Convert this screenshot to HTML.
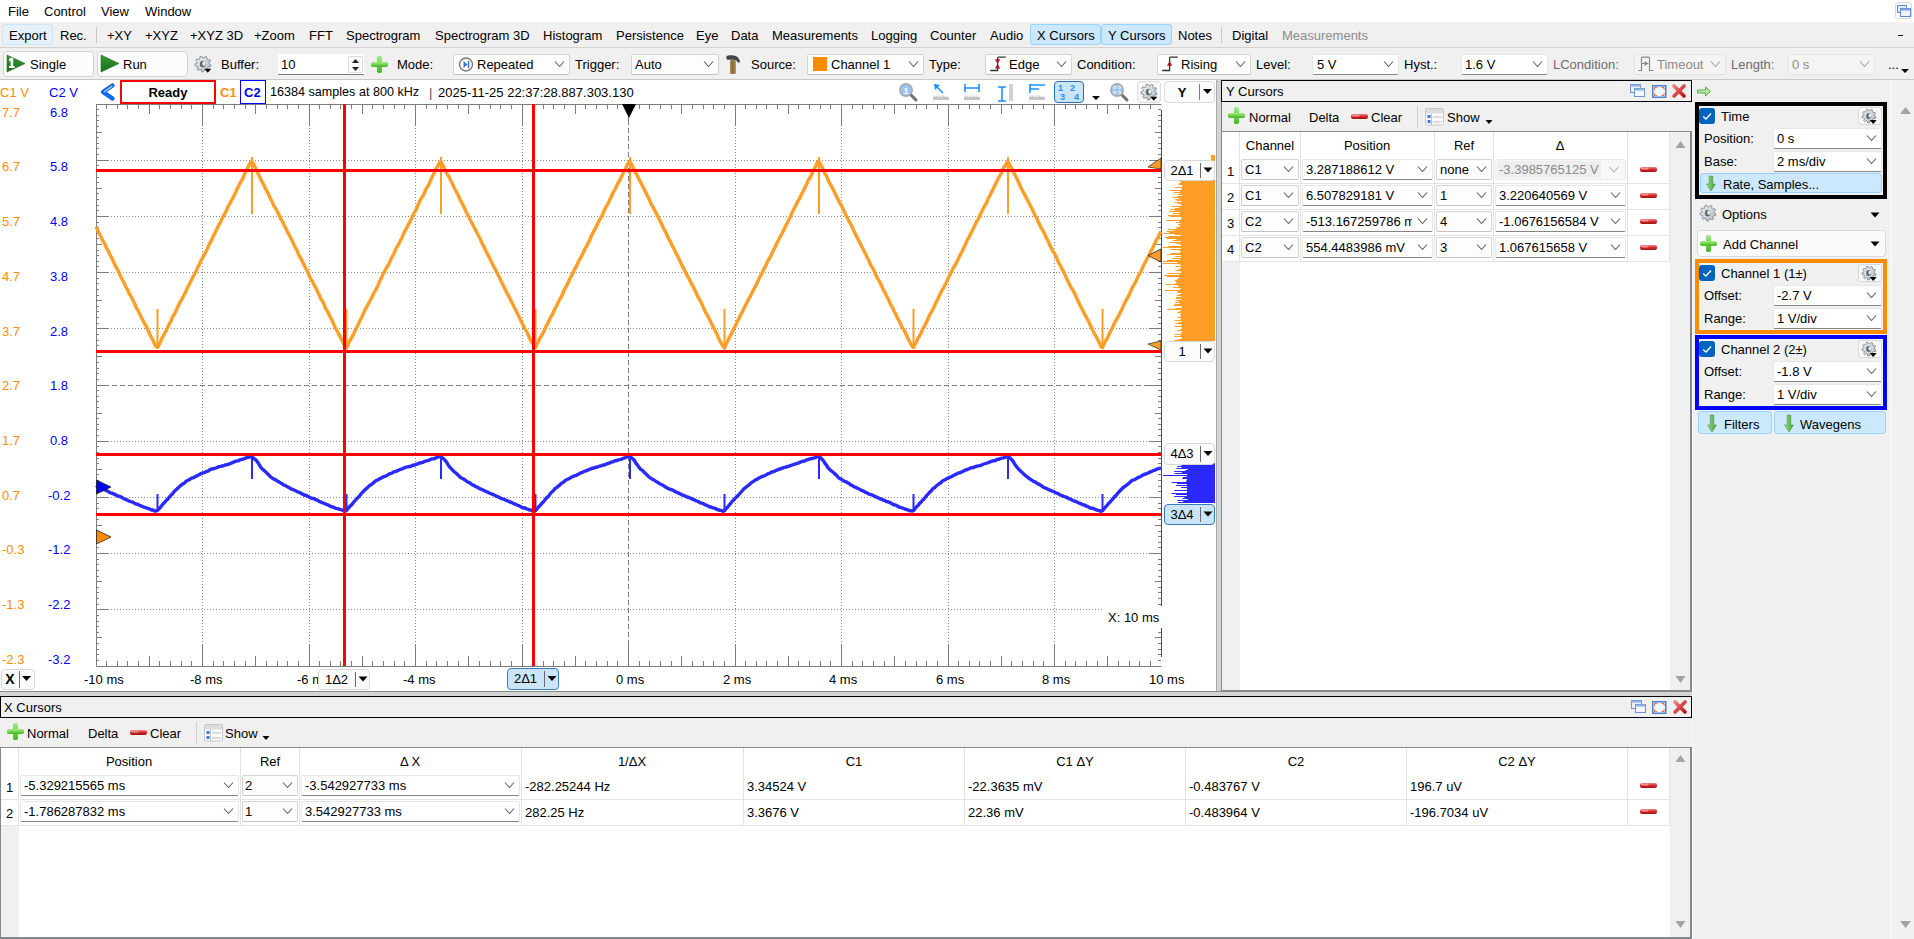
<!DOCTYPE html>
<html><head><meta charset="utf-8"><title>WaveForms Scope</title>
<style>
html,body{margin:0;padding:0;}
body{width:1914px;height:939px;overflow:hidden;position:relative;background:#f0f0f0;font-family:"Liberation Sans", sans-serif;font-size:13px;color:#000;}
.t{position:absolute;white-space:nowrap;line-height:13px;}
svg{position:absolute;left:0;top:0;}
</style></head><body>
<div style="position:absolute;left:0px;top:0px;width:1914px;height:22px;box-sizing:border-box;background:#fff;"></div><div style="position:absolute;left:0px;top:22px;width:1914px;height:1px;box-sizing:border-box;background:#f5f5f5;"></div><div style="position:absolute;left:96px;top:27px;width:1px;height:16px;box-sizing:border-box;background:#c8c8c8;"></div><div style="position:absolute;left:1221px;top:27px;width:1px;height:16px;box-sizing:border-box;background:#c8c8c8;"></div><div style="position:absolute;left:1898px;top:35px;width:5px;height:1px;box-sizing:border-box;background:#000;"></div><div style="position:absolute;left:0px;top:47px;width:1914px;height:1px;box-sizing:border-box;background:#d2d2d2;"></div><div style="position:absolute;left:0px;top:79px;width:1914px;height:1px;box-sizing:border-box;background:#c8c8c8;"></div><div style="position:absolute;left:0px;top:80px;width:1216px;height:611px;box-sizing:border-box;background:#fff;"></div><div style="position:absolute;left:1216px;top:80px;width:6px;height:611px;box-sizing:border-box;background:#d4d4d4;border-left:1px solid #a8a8a8;border-right:1px solid #7c7c7c;"></div><div style="position:absolute;left:0px;top:691px;width:1692px;height:5px;box-sizing:border-box;background:#d4d4d4;border-top:1px solid #8a8a8a;"></div><div style="position:absolute;left:1221px;top:80px;width:471px;height:22px;box-sizing:border-box;background:#f0f0f0;border:1px solid #000;"></div><div style="position:absolute;left:1417px;top:106px;width:1px;height:22px;box-sizing:border-box;background:#d0d0d0;"></div><div style="position:absolute;left:1221px;top:131px;width:471px;height:560px;box-sizing:border-box;background:#fff;border:1px solid #828790;border-right:2px solid #828790;"></div><div style="position:absolute;left:1222px;top:262px;width:18px;height:428px;background:#f0f0f0;"></div><div style="position:absolute;left:1670px;top:132px;width:20px;height:558px;background:#f0f0f0;"></div><div style="position:absolute;left:1239px;top:132px;width:1px;height:130px;background:#e3e3e3;"></div><div style="position:absolute;left:1300px;top:132px;width:1px;height:130px;background:#e3e3e3;"></div><div style="position:absolute;left:1434px;top:132px;width:1px;height:130px;background:#e3e3e3;"></div><div style="position:absolute;left:1493px;top:132px;width:1px;height:130px;background:#e3e3e3;"></div><div style="position:absolute;left:1627px;top:132px;width:1px;height:130px;background:#e3e3e3;"></div><div style="position:absolute;left:1669px;top:132px;width:1px;height:130px;background:#e3e3e3;"></div><div style="position:absolute;left:1222px;top:183px;width:447px;height:1px;background:#e3e3e3;"></div><div style="position:absolute;left:1222px;top:209px;width:447px;height:1px;background:#e3e3e3;"></div><div style="position:absolute;left:1222px;top:235px;width:447px;height:1px;background:#e3e3e3;"></div><div style="position:absolute;left:1222px;top:261px;width:447px;height:1px;background:#e3e3e3;"></div><div style="position:absolute;left:1692px;top:80px;width:1px;height:859px;background:#fafafa;"></div><div style="position:absolute;left:1891px;top:80px;width:1px;height:859px;background:#fdfdfd;"></div><div style="position:absolute;left:0px;top:696px;width:1692px;height:22px;box-sizing:border-box;background:#f0f0f0;border:1px solid #000;"></div><div style="position:absolute;left:196px;top:722px;width:1px;height:22px;box-sizing:border-box;background:#d0d0d0;"></div><div style="position:absolute;left:0px;top:747px;width:1692px;height:192px;box-sizing:border-box;background:#fff;border:1px solid #828790;border-right:2px solid #828790;border-bottom:2px solid #828790;"></div><div style="position:absolute;left:1px;top:826px;width:18px;height:111px;background:#f0f0f0;"></div><div style="position:absolute;left:1670px;top:748px;width:20px;height:189px;background:#f0f0f0;"></div><div style="position:absolute;left:18px;top:748px;width:1px;height:78px;background:#e3e3e3;"></div><div style="position:absolute;left:240px;top:748px;width:1px;height:78px;background:#e3e3e3;"></div><div style="position:absolute;left:299px;top:748px;width:1px;height:78px;background:#e3e3e3;"></div><div style="position:absolute;left:521px;top:748px;width:1px;height:78px;background:#e3e3e3;"></div><div style="position:absolute;left:743px;top:748px;width:1px;height:78px;background:#e3e3e3;"></div><div style="position:absolute;left:964px;top:748px;width:1px;height:78px;background:#e3e3e3;"></div><div style="position:absolute;left:1185px;top:748px;width:1px;height:78px;background:#e3e3e3;"></div><div style="position:absolute;left:1406px;top:748px;width:1px;height:78px;background:#e3e3e3;"></div><div style="position:absolute;left:1627px;top:748px;width:1px;height:78px;background:#e3e3e3;"></div><div style="position:absolute;left:1669px;top:748px;width:1px;height:78px;background:#e3e3e3;"></div><div style="position:absolute;left:1px;top:799px;width:1668px;height:1px;background:#e3e3e3;"></div><div style="position:absolute;left:1px;top:825px;width:1668px;height:1px;background:#e3e3e3;"></div>
<svg width="1914" height="939" viewBox="0 0 1914 939"><defs>
<linearGradient id="gtri" x1="0" y1="0" x2="0" y2="1"><stop offset="0" stop-color="#3a9a3a"/><stop offset="1" stop-color="#1a6e1a"/></linearGradient>
<linearGradient id="gplus" x1="0" y1="0" x2="0" y2="1"><stop offset="0" stop-color="#a6ec8c"/><stop offset="0.5" stop-color="#72d24e"/><stop offset="1" stop-color="#3cb81e"/></linearGradient>
<linearGradient id="rpill" x1="0" y1="0" x2="0" y2="1"><stop offset="0" stop-color="#f08a8a"/><stop offset="0.5" stop-color="#d62a2a"/><stop offset="1" stop-color="#9a1010"/></linearGradient>
<linearGradient id="gear" x1="0" y1="0" x2="1" y2="1"><stop offset="0" stop-color="#f2f4f5"/><stop offset="1" stop-color="#b4bbc1"/></linearGradient>
<linearGradient id="garr" x1="0" y1="0" x2="1" y2="0"><stop offset="0" stop-color="#9fdc8a"/><stop offset="1" stop-color="#3f9f35"/></linearGradient>
<linearGradient id="xred" x1="0" y1="0" x2="1" y2="1"><stop offset="0" stop-color="#f08080"/><stop offset="1" stop-color="#c01010"/></linearGradient>
<linearGradient id="hmr" x1="0" y1="0" x2="1" y2="0"><stop offset="0" stop-color="#a88a52"/><stop offset="0.5" stop-color="#8a6a30"/><stop offset="1" stop-color="#b09a6a"/></linearGradient>
</defs><g shape-rendering="auto"><line x1="202.5" y1="104" x2="202.5" y2="666" stroke="#8a8a8a" stroke-width="1" stroke-dasharray="1 2"/><line x1="309.5" y1="104" x2="309.5" y2="666" stroke="#8a8a8a" stroke-width="1" stroke-dasharray="1 2"/><line x1="415.5" y1="104" x2="415.5" y2="666" stroke="#8a8a8a" stroke-width="1" stroke-dasharray="1 2"/><line x1="522.5" y1="104" x2="522.5" y2="666" stroke="#8a8a8a" stroke-width="1" stroke-dasharray="1 2"/><line x1="628.5" y1="104" x2="628.5" y2="666" stroke="#7a7a7a" stroke-width="1" stroke-dasharray="5 3"/><line x1="735.5" y1="104" x2="735.5" y2="666" stroke="#8a8a8a" stroke-width="1" stroke-dasharray="1 2"/><line x1="841.5" y1="104" x2="841.5" y2="666" stroke="#8a8a8a" stroke-width="1" stroke-dasharray="1 2"/><line x1="948.5" y1="104" x2="948.5" y2="666" stroke="#8a8a8a" stroke-width="1" stroke-dasharray="1 2"/><line x1="1054.5" y1="104" x2="1054.5" y2="666" stroke="#8a8a8a" stroke-width="1" stroke-dasharray="1 2"/><line x1="96" y1="160.5" x2="1161" y2="160.5" stroke="#8a8a8a" stroke-width="1" stroke-dasharray="1 2"/><line x1="96" y1="216.5" x2="1161" y2="216.5" stroke="#8a8a8a" stroke-width="1" stroke-dasharray="1 2"/><line x1="96" y1="272.5" x2="1161" y2="272.5" stroke="#8a8a8a" stroke-width="1" stroke-dasharray="1 2"/><line x1="96" y1="328.5" x2="1161" y2="328.5" stroke="#8a8a8a" stroke-width="1" stroke-dasharray="1 2"/><line x1="96" y1="385.5" x2="1161" y2="385.5" stroke="#7a7a7a" stroke-width="1" stroke-dasharray="5 3"/><line x1="96" y1="441.5" x2="1161" y2="441.5" stroke="#8a8a8a" stroke-width="1" stroke-dasharray="1 2"/><line x1="96" y1="497.5" x2="1161" y2="497.5" stroke="#8a8a8a" stroke-width="1" stroke-dasharray="1 2"/><line x1="96" y1="553.5" x2="1161" y2="553.5" stroke="#8a8a8a" stroke-width="1" stroke-dasharray="1 2"/><line x1="96" y1="609.5" x2="1161" y2="609.5" stroke="#8a8a8a" stroke-width="1" stroke-dasharray="1 2"/><path d="M96.5,104 V666.5 H1161.5 M96,104.5 H1161.5" stroke="#7c7c7c" stroke-width="1" fill="none"/><path d="M106.5,104 v5 M106.5,666 v-5 M117.5,104 v5 M117.5,666 v-5 M127.5,104 v5 M127.5,666 v-5 M138.5,104 v5 M138.5,666 v-5 M149.5,104 v10 M149.5,666 v-10 M159.5,104 v5 M159.5,666 v-5 M170.5,104 v5 M170.5,666 v-5 M181.5,104 v5 M181.5,666 v-5 M191.5,104 v5 M191.5,666 v-5 M202.5,104 v21 M202.5,666 v-21 M213.5,104 v5 M213.5,666 v-5 M223.5,104 v5 M223.5,666 v-5 M234.5,104 v5 M234.5,666 v-5 M245.5,104 v5 M245.5,666 v-5 M255.5,104 v10 M255.5,666 v-10 M266.5,104 v5 M266.5,666 v-5 M277.5,104 v5 M277.5,666 v-5 M287.5,104 v5 M287.5,666 v-5 M298.5,104 v5 M298.5,666 v-5 M309.5,104 v21 M309.5,666 v-21 M319.5,104 v5 M319.5,666 v-5 M330.5,104 v5 M330.5,666 v-5 M340.5,104 v5 M340.5,666 v-5 M351.5,104 v5 M351.5,666 v-5 M362.5,104 v10 M362.5,666 v-10 M372.5,104 v5 M372.5,666 v-5 M383.5,104 v5 M383.5,666 v-5 M394.5,104 v5 M394.5,666 v-5 M404.5,104 v5 M404.5,666 v-5 M415.5,104 v21 M415.5,666 v-21 M426.5,104 v5 M426.5,666 v-5 M436.5,104 v5 M436.5,666 v-5 M447.5,104 v5 M447.5,666 v-5 M458.5,104 v5 M458.5,666 v-5 M468.5,104 v10 M468.5,666 v-10 M479.5,104 v5 M479.5,666 v-5 M490.5,104 v5 M490.5,666 v-5 M500.5,104 v5 M500.5,666 v-5 M511.5,104 v5 M511.5,666 v-5 M522.5,104 v21 M522.5,666 v-21 M532.5,104 v5 M532.5,666 v-5 M543.5,104 v5 M543.5,666 v-5 M553.5,104 v5 M553.5,666 v-5 M564.5,104 v5 M564.5,666 v-5 M575.5,104 v10 M575.5,666 v-10 M585.5,104 v5 M585.5,666 v-5 M596.5,104 v5 M596.5,666 v-5 M607.5,104 v5 M607.5,666 v-5 M617.5,104 v5 M617.5,666 v-5 M628.5,104 v21 M628.5,666 v-21 M639.5,104 v5 M639.5,666 v-5 M649.5,104 v5 M649.5,666 v-5 M660.5,104 v5 M660.5,666 v-5 M671.5,104 v5 M671.5,666 v-5 M681.5,104 v10 M681.5,666 v-10 M692.5,104 v5 M692.5,666 v-5 M703.5,104 v5 M703.5,666 v-5 M713.5,104 v5 M713.5,666 v-5 M724.5,104 v5 M724.5,666 v-5 M735.5,104 v21 M735.5,666 v-21 M745.5,104 v5 M745.5,666 v-5 M756.5,104 v5 M756.5,666 v-5 M766.5,104 v5 M766.5,666 v-5 M777.5,104 v5 M777.5,666 v-5 M788.5,104 v10 M788.5,666 v-10 M798.5,104 v5 M798.5,666 v-5 M809.5,104 v5 M809.5,666 v-5 M820.5,104 v5 M820.5,666 v-5 M830.5,104 v5 M830.5,666 v-5 M841.5,104 v21 M841.5,666 v-21 M852.5,104 v5 M852.5,666 v-5 M862.5,104 v5 M862.5,666 v-5 M873.5,104 v5 M873.5,666 v-5 M884.5,104 v5 M884.5,666 v-5 M894.5,104 v10 M894.5,666 v-10 M905.5,104 v5 M905.5,666 v-5 M916.5,104 v5 M916.5,666 v-5 M926.5,104 v5 M926.5,666 v-5 M937.5,104 v5 M937.5,666 v-5 M948.5,104 v21 M948.5,666 v-21 M958.5,104 v5 M958.5,666 v-5 M969.5,104 v5 M969.5,666 v-5 M979.5,104 v5 M979.5,666 v-5 M990.5,104 v5 M990.5,666 v-5 M1001.5,104 v10 M1001.5,666 v-10 M1011.5,104 v5 M1011.5,666 v-5 M1022.5,104 v5 M1022.5,666 v-5 M1033.5,104 v5 M1033.5,666 v-5 M1043.5,104 v5 M1043.5,666 v-5 M1054.5,104 v21 M1054.5,666 v-21 M1065.5,104 v5 M1065.5,666 v-5 M1075.5,104 v5 M1075.5,666 v-5 M1086.5,104 v5 M1086.5,666 v-5 M1097.5,104 v5 M1097.5,666 v-5 M1107.5,104 v10 M1107.5,666 v-10 M1118.5,104 v5 M1118.5,666 v-5 M1129.5,104 v5 M1129.5,666 v-5 M1139.5,104 v5 M1139.5,666 v-5 M1150.5,104 v5 M1150.5,666 v-5 M96,109.5 h3 M1161,109.5 h-3 M96,115.5 h3 M1161,115.5 h-3 M96,120.5 h3 M1161,120.5 h-3 M96,126.5 h3 M1161,126.5 h-3 M96,132.5 h6 M1161,132.5 h-6 M96,137.5 h3 M1161,137.5 h-3 M96,143.5 h3 M1161,143.5 h-3 M96,148.5 h3 M1161,148.5 h-3 M96,154.5 h3 M1161,154.5 h-3 M96,160.5 h12 M1161,160.5 h-12 M96,165.5 h3 M1161,165.5 h-3 M96,171.5 h3 M1161,171.5 h-3 M96,177.5 h3 M1161,177.5 h-3 M96,182.5 h3 M1161,182.5 h-3 M96,188.5 h6 M1161,188.5 h-6 M96,193.5 h3 M1161,193.5 h-3 M96,199.5 h3 M1161,199.5 h-3 M96,205.5 h3 M1161,205.5 h-3 M96,210.5 h3 M1161,210.5 h-3 M96,216.5 h12 M1161,216.5 h-12 M96,222.5 h3 M1161,222.5 h-3 M96,227.5 h3 M1161,227.5 h-3 M96,233.5 h3 M1161,233.5 h-3 M96,238.5 h3 M1161,238.5 h-3 M96,244.5 h6 M1161,244.5 h-6 M96,250.5 h3 M1161,250.5 h-3 M96,255.5 h3 M1161,255.5 h-3 M96,261.5 h3 M1161,261.5 h-3 M96,266.5 h3 M1161,266.5 h-3 M96,272.5 h12 M1161,272.5 h-12 M96,278.5 h3 M1161,278.5 h-3 M96,283.5 h3 M1161,283.5 h-3 M96,289.5 h3 M1161,289.5 h-3 M96,295.5 h3 M1161,295.5 h-3 M96,300.5 h6 M1161,300.5 h-6 M96,306.5 h3 M1161,306.5 h-3 M96,311.5 h3 M1161,311.5 h-3 M96,317.5 h3 M1161,317.5 h-3 M96,323.5 h3 M1161,323.5 h-3 M96,328.5 h12 M1161,328.5 h-12 M96,334.5 h3 M1161,334.5 h-3 M96,340.5 h3 M1161,340.5 h-3 M96,345.5 h3 M1161,345.5 h-3 M96,351.5 h3 M1161,351.5 h-3 M96,356.5 h6 M1161,356.5 h-6 M96,362.5 h3 M1161,362.5 h-3 M96,368.5 h3 M1161,368.5 h-3 M96,373.5 h3 M1161,373.5 h-3 M96,379.5 h3 M1161,379.5 h-3 M96,385.5 h12 M1161,385.5 h-12 M96,390.5 h3 M1161,390.5 h-3 M96,396.5 h3 M1161,396.5 h-3 M96,401.5 h3 M1161,401.5 h-3 M96,407.5 h3 M1161,407.5 h-3 M96,413.5 h6 M1161,413.5 h-6 M96,418.5 h3 M1161,418.5 h-3 M96,424.5 h3 M1161,424.5 h-3 M96,429.5 h3 M1161,429.5 h-3 M96,435.5 h3 M1161,435.5 h-3 M96,441.5 h12 M1161,441.5 h-12 M96,446.5 h3 M1161,446.5 h-3 M96,452.5 h3 M1161,452.5 h-3 M96,458.5 h3 M1161,458.5 h-3 M96,463.5 h3 M1161,463.5 h-3 M96,469.5 h6 M1161,469.5 h-6 M96,474.5 h3 M1161,474.5 h-3 M96,480.5 h3 M1161,480.5 h-3 M96,486.5 h3 M1161,486.5 h-3 M96,491.5 h3 M1161,491.5 h-3 M96,497.5 h12 M1161,497.5 h-12 M96,503.5 h3 M1161,503.5 h-3 M96,508.5 h3 M1161,508.5 h-3 M96,514.5 h3 M1161,514.5 h-3 M96,519.5 h3 M1161,519.5 h-3 M96,525.5 h6 M1161,525.5 h-6 M96,531.5 h3 M1161,531.5 h-3 M96,536.5 h3 M1161,536.5 h-3 M96,542.5 h3 M1161,542.5 h-3 M96,547.5 h3 M1161,547.5 h-3 M96,553.5 h12 M1161,553.5 h-12 M96,559.5 h3 M1161,559.5 h-3 M96,564.5 h3 M1161,564.5 h-3 M96,570.5 h3 M1161,570.5 h-3 M96,576.5 h3 M1161,576.5 h-3 M96,581.5 h6 M1161,581.5 h-6 M96,587.5 h3 M1161,587.5 h-3 M96,592.5 h3 M1161,592.5 h-3 M96,598.5 h3 M1161,598.5 h-3 M96,604.5 h3 M1161,604.5 h-3 M96,609.5 h12 M1161,609.5 h-12 M96,615.5 h3 M1161,615.5 h-3 M96,621.5 h3 M1161,621.5 h-3 M96,626.5 h3 M1161,626.5 h-3 M96,632.5 h3 M1161,632.5 h-3 M96,637.5 h6 M1161,637.5 h-6 M96,643.5 h3 M1161,643.5 h-3 M96,649.5 h3 M1161,649.5 h-3 M96,654.5 h3 M1161,654.5 h-3 M96,660.5 h3 M1161,660.5 h-3" stroke="#7c7c7c" stroke-width="1" fill="none"/><path d="M1161.5,110 V606 M1161.5,628 V657" stroke="#ff0000" stroke-width="1"/><rect x="1104" y="606" width="57" height="21" fill="#fff"/><polyline points="96.0,226.9 97.5,229.7 99.0,233.3 100.5,235.6 102.0,239.1 103.5,241.9 105.0,244.5 106.5,248.0 108.0,250.5 109.5,253.9 111.0,256.5 112.5,259.5 114.0,262.9 115.5,266.3 117.0,268.5 118.5,271.6 120.0,275.0 121.5,278.4 123.0,281.0 124.5,283.7 126.0,287.4 127.5,289.3 129.0,293.2 130.5,295.5 132.0,298.3 133.5,301.3 135.0,304.5 136.5,308.1 138.0,310.3 139.5,313.8 141.0,316.8 142.5,319.5 144.0,322.7 145.5,325.1 147.0,328.1 148.5,331.2 150.0,334.8 151.5,337.5 153.0,340.3 154.5,343.6 156.0,346.5 157.5,347.3 159.0,344.9 160.5,341.8 162.0,338.2 163.5,335.7 165.0,332.6 166.5,330.1 168.0,326.9 169.5,323.4 171.0,321.2 172.5,317.2 174.0,314.6 175.5,312.0 177.0,308.3 178.5,305.7 180.0,302.2 181.5,300.0 183.0,297.1 184.5,293.9 186.0,291.3 187.5,287.6 189.0,285.1 190.5,282.0 192.0,279.0 193.5,275.8 195.0,273.3 196.5,270.5 198.0,266.9 199.5,264.1 201.0,260.4 202.5,258.2 204.0,255.2 205.5,252.6 207.0,249.4 208.5,245.8 210.0,242.9 211.5,240.3 213.0,236.5 214.5,234.1 216.0,230.7 217.5,227.7 219.0,224.6 220.5,222.5 222.0,218.7 223.5,215.9 225.0,213.1 226.5,210.7 228.0,206.7 229.5,204.2 231.0,201.3 232.5,198.8 234.0,195.7 235.5,192.8 237.0,189.1 238.5,186.3 240.0,183.2 241.5,180.9 243.0,178.0 244.5,174.0 246.0,171.1 247.5,168.1 249.0,165.2 250.5,162.5 252.0,161.6 253.5,164.2 255.0,166.9 256.5,170.3 258.0,173.3 259.5,176.5 261.0,179.9 262.5,182.6 264.0,185.4 265.5,188.5 267.0,191.5 268.5,193.8 270.0,197.8 271.5,200.6 273.0,203.7 274.5,206.6 276.0,209.1 277.5,212.1 279.0,214.7 280.5,218.4 282.0,220.7 283.5,223.6 285.0,226.8 286.5,229.7 288.0,232.9 289.5,235.6 291.0,238.5 292.5,241.6 294.0,244.6 295.5,247.9 297.0,250.4 298.5,254.5 300.0,257.1 301.5,259.5 303.0,262.7 304.5,265.8 306.0,268.8 307.5,271.5 309.0,275.3 310.5,278.5 312.0,280.8 313.5,283.8 315.0,286.3 316.5,289.3 318.0,292.6 319.5,295.5 321.0,299.2 322.5,301.3 324.0,304.2 325.5,308.3 327.0,310.7 328.5,313.3 330.0,316.7 331.5,319.1 333.0,322.7 334.5,326.2 336.0,329.0 337.5,331.8 339.0,334.3 340.5,337.4 342.0,340.1 343.5,343.9 345.0,346.5 346.5,347.8 348.0,344.3 349.5,341.2 351.0,338.9 352.5,336.2 354.0,333.0 355.5,330.0 357.0,327.0 358.5,323.9 360.0,320.3 361.5,317.7 363.0,314.5 364.5,311.1 366.0,308.1 367.5,305.5 369.0,302.5 370.5,300.0 372.0,297.3 373.5,293.7 375.0,291.3 376.5,288.4 378.0,285.4 379.5,281.7 381.0,278.5 382.5,275.6 384.0,272.5 385.5,269.6 387.0,267.1 388.5,264.4 390.0,261.4 391.5,258.0 393.0,255.2 394.5,252.4 396.0,248.5 397.5,246.2 399.0,243.6 400.5,240.4 402.0,237.4 403.5,234.1 405.0,230.7 406.5,228.5 408.0,225.0 409.5,222.5 411.0,219.8 412.5,216.1 414.0,213.1 415.5,210.8 417.0,207.5 418.5,203.9 420.0,200.8 421.5,197.9 423.0,195.8 424.5,192.7 426.0,188.9 427.5,186.8 429.0,184.0 430.5,180.6 432.0,177.2 433.5,174.5 435.0,171.0 436.5,167.9 438.0,166.0 439.5,162.7 441.0,161.5 442.5,165.0 444.0,167.4 445.5,170.9 447.0,173.8 448.5,176.1 450.0,179.1 451.5,182.1 453.0,185.1 454.5,188.5 456.0,191.0 457.5,194.2 459.0,196.9 460.5,200.8 462.0,203.1 463.5,206.2 465.0,209.3 466.5,212.7 468.0,215.1 469.5,218.7 471.0,221.2 472.5,224.2 474.0,227.2 475.5,229.6 477.0,233.0 478.5,235.7 480.0,238.5 481.5,242.4 483.0,244.7 484.5,248.0 486.0,251.3 487.5,254.1 489.0,256.8 490.5,260.0 492.0,263.0 493.5,266.3 495.0,268.5 496.5,272.0 498.0,274.6 499.5,277.6 501.0,281.2 502.5,283.9 504.0,286.9 505.5,290.1 507.0,293.3 508.5,295.7 510.0,298.9 511.5,301.8 513.0,304.7 514.5,307.9 516.0,310.6 517.5,313.7 519.0,316.6 520.5,320.2 522.0,322.9 523.5,326.1 525.0,329.1 526.5,331.3 528.0,334.6 529.5,338.1 531.0,341.0 532.5,343.1 534.0,346.1 535.5,347.4 537.0,344.0 538.5,341.2 540.0,338.0 541.5,335.8 543.0,332.9 544.5,330.1 546.0,326.2 547.5,323.9 549.0,320.8 550.5,317.2 552.0,315.1 553.5,312.3 555.0,308.4 556.5,306.3 558.0,302.6 559.5,299.7 561.0,297.4 562.5,294.2 564.0,290.4 565.5,287.7 567.0,284.9 568.5,281.7 570.0,278.5 571.5,275.7 573.0,273.2 574.5,269.3 576.0,267.0 577.5,263.9 579.0,260.4 580.5,257.8 582.0,255.1 583.5,252.0 585.0,248.5 586.5,246.6 588.0,243.4 589.5,240.6 591.0,236.6 592.5,233.8 594.0,230.6 595.5,228.5 597.0,224.9 598.5,221.7 600.0,219.1 601.5,216.7 603.0,213.6 604.5,209.9 606.0,206.8 607.5,204.8 609.0,201.4 610.5,198.5 612.0,194.8 613.5,191.8 615.0,189.6 616.5,186.3 618.0,182.9 619.5,180.9 621.0,177.6 622.5,174.8 624.0,170.9 625.5,168.9 627.0,165.0 628.5,162.9 630.0,161.4 631.5,164.3 633.0,167.5 634.5,171.0 636.0,173.2 637.5,176.0 639.0,179.4 640.5,182.1 642.0,184.9 643.5,187.9 645.0,190.8 646.5,194.0 648.0,197.1 649.5,200.1 651.0,203.6 652.5,206.0 654.0,209.2 655.5,211.8 657.0,215.0 658.5,217.6 660.0,220.9 661.5,223.6 663.0,227.4 664.5,230.2 666.0,232.7 667.5,236.1 669.0,239.6 670.5,241.6 672.0,245.4 673.5,248.0 675.0,251.0 676.5,254.4 678.0,256.9 679.5,260.0 681.0,263.2 682.5,266.5 684.0,268.7 685.5,272.3 687.0,275.1 688.5,278.0 690.0,280.7 691.5,283.7 693.0,286.3 694.5,289.4 696.0,292.3 697.5,296.1 699.0,298.5 700.5,301.3 702.0,304.2 703.5,308.1 705.0,311.1 706.5,313.9 708.0,316.4 709.5,319.3 711.0,322.4 712.5,325.6 714.0,328.2 715.5,331.5 717.0,334.3 718.5,338.1 720.0,341.1 721.5,343.6 723.0,346.2 724.5,348.1 726.0,344.3 727.5,341.4 729.0,338.0 730.5,335.4 732.0,332.6 733.5,329.6 735.0,326.3 736.5,323.6 738.0,320.1 739.5,317.4 741.0,314.2 742.5,311.6 744.0,308.2 745.5,305.2 747.0,302.5 748.5,299.4 750.0,296.9 751.5,293.8 753.0,291.1 754.5,288.0 756.0,285.1 757.5,282.3 759.0,278.7 760.5,275.7 762.0,273.5 763.5,269.5 765.0,267.2 766.5,264.1 768.0,260.4 769.5,258.4 771.0,255.5 772.5,252.2 774.0,249.3 775.5,246.4 777.0,242.6 778.5,240.1 780.0,237.1 781.5,234.5 783.0,231.5 784.5,228.5 786.0,225.3 787.5,222.6 789.0,219.4 790.5,216.4 792.0,212.9 793.5,209.7 795.0,206.8 796.5,204.1 798.0,200.8 799.5,198.7 801.0,195.4 802.5,192.5 804.0,189.5 805.5,186.6 807.0,183.4 808.5,179.8 810.0,177.8 811.5,174.7 813.0,171.4 814.5,168.5 816.0,165.7 817.5,162.0 819.0,161.8 820.5,164.2 822.0,167.0 823.5,170.2 825.0,173.7 826.5,176.1 828.0,179.7 829.5,183.0 831.0,185.4 832.5,188.2 834.0,191.3 835.5,194.5 837.0,197.6 838.5,200.4 840.0,203.4 841.5,205.7 843.0,208.8 844.5,211.9 846.0,215.5 847.5,218.0 849.0,221.3 850.5,223.6 852.0,226.6 853.5,229.9 855.0,233.3 856.5,236.3 858.0,239.3 859.5,241.8 861.0,245.1 862.5,248.0 864.0,251.0 865.5,253.5 867.0,257.5 868.5,259.6 870.0,263.5 871.5,266.5 873.0,268.3 874.5,271.9 876.0,275.3 877.5,278.4 879.0,280.8 880.5,283.6 882.0,286.5 883.5,290.3 885.0,292.4 886.5,295.9 888.0,298.3 889.5,301.8 891.0,305.3 892.5,307.3 894.0,311.1 895.5,313.7 897.0,317.1 898.5,319.9 900.0,322.3 901.5,326.1 903.0,328.6 904.5,331.0 906.0,334.0 907.5,337.5 909.0,340.5 910.5,343.3 912.0,346.1 913.5,347.3 915.0,344.3 916.5,341.9 918.0,338.0 919.5,335.9 921.0,333.0 922.5,329.1 924.0,327.1 925.5,323.9 927.0,321.1 928.5,317.4 930.0,314.5 931.5,311.6 933.0,309.3 934.5,305.8 936.0,302.6 937.5,299.7 939.0,296.5 940.5,293.2 942.0,290.3 943.5,288.2 945.0,284.6 946.5,282.4 948.0,278.6 949.5,275.6 951.0,272.9 952.5,269.5 954.0,266.8 955.5,264.5 957.0,261.4 958.5,258.4 960.0,255.2 961.5,252.5 963.0,249.6 964.5,246.1 966.0,243.3 967.5,239.5 969.0,237.4 970.5,234.0 972.0,231.4 973.5,228.3 975.0,224.9 976.5,221.6 978.0,219.7 979.5,215.8 981.0,213.2 982.5,210.0 984.0,207.0 985.5,204.6 987.0,201.9 988.5,198.0 990.0,195.5 991.5,192.1 993.0,189.4 994.5,186.2 996.0,183.0 997.5,180.0 999.0,177.1 1000.5,174.9 1002.0,171.4 1003.5,168.1 1005.0,166.0 1006.5,163.1 1008.0,161.4 1009.5,164.0 1011.0,167.1 1012.5,170.0 1014.0,173.2 1015.5,175.9 1017.0,179.1 1018.5,182.1 1020.0,185.5 1021.5,188.8 1023.0,191.6 1024.5,194.2 1026.0,197.2 1027.5,200.3 1029.0,203.1 1030.5,206.1 1032.0,208.7 1033.5,212.0 1035.0,215.8 1036.5,217.7 1038.0,221.2 1039.5,224.3 1041.0,227.6 1042.5,229.8 1044.0,232.8 1045.5,235.8 1047.0,239.0 1048.5,242.0 1050.0,245.6 1051.5,248.5 1053.0,251.5 1054.5,253.4 1056.0,256.4 1057.5,260.2 1059.0,263.4 1060.5,265.9 1062.0,269.0 1063.5,271.3 1065.0,274.8 1066.5,278.4 1068.0,281.3 1069.5,284.3 1071.0,287.4 1072.5,289.5 1074.0,292.3 1075.5,295.4 1077.0,298.8 1078.5,302.0 1080.0,305.3 1081.5,308.0 1083.0,310.9 1084.5,314.0 1086.0,316.6 1087.5,319.7 1089.0,322.1 1090.5,326.0 1092.0,328.3 1093.5,332.1 1095.0,334.7 1096.5,337.3 1098.0,340.1 1099.5,343.2 1101.0,346.7 1102.5,347.7 1104.0,344.1 1105.5,341.0 1107.0,338.6 1108.5,335.7 1110.0,332.5 1111.5,329.3 1113.0,326.7 1114.5,323.0 1116.0,320.4 1117.5,317.6 1119.0,315.2 1120.5,311.9 1122.0,309.2 1123.5,305.7 1125.0,302.4 1126.5,299.5 1128.0,297.3 1129.5,294.0 1131.0,290.6 1132.5,287.2 1134.0,284.8 1135.5,282.1 1137.0,278.8 1138.5,275.6 1140.0,273.1 1141.5,270.4 1143.0,266.6 1144.5,263.4 1146.0,260.8 1147.5,257.9 1149.0,255.2 1150.5,251.7 1152.0,249.4 1153.5,246.3 1155.0,243.1 1156.5,239.7 1158.0,237.7 1159.5,233.9 1161.0,231.5" fill="none" stroke="#ff9d26" stroke-width="3.4" stroke-linejoin="round"/><polyline points="96.0,485.4 97.5,486.3 99.0,487.4 100.5,487.8 102.0,488.9 103.5,489.4 105.0,489.9 106.5,490.6 108.0,491.4 109.5,492.2 111.0,493.1 112.5,493.3 114.0,494.2 115.5,494.7 117.0,495.8 118.5,496.0 120.0,496.6 121.5,497.2 123.0,498.1 124.5,499.0 126.0,499.7 127.5,500.2 129.0,501.0 130.5,501.6 132.0,501.9 133.5,502.5 135.0,503.6 136.5,504.1 138.0,504.3 139.5,505.4 141.0,505.9 142.5,506.5 144.0,507.1 145.5,507.6 147.0,508.0 148.5,508.7 150.0,509.2 151.5,510.0 153.0,510.0 154.5,511.0 156.0,511.0 157.5,510.4 159.0,508.9 160.5,507.2 162.0,505.3 163.5,503.4 165.0,502.0 166.5,500.2 168.0,498.9 169.5,496.8 171.0,495.2 172.5,493.9 174.0,491.7 175.5,490.3 177.0,488.9 178.5,487.7 180.0,486.1 181.5,484.9 183.0,483.7 184.5,483.0 186.0,481.4 187.5,480.5 189.0,479.9 190.5,478.8 192.0,478.0 193.5,477.7 195.0,476.8 196.5,475.8 198.0,475.3 199.5,474.3 201.0,473.7 202.5,472.9 204.0,472.7 205.5,472.1 207.0,471.3 208.5,470.9 210.0,469.7 211.5,469.2 213.0,468.7 214.5,468.5 216.0,468.0 217.5,467.3 219.0,466.7 220.5,466.4 222.0,466.0 223.5,465.8 225.0,465.0 226.5,464.9 228.0,464.3 229.5,463.8 231.0,463.3 232.5,462.6 234.0,461.9 235.5,461.4 237.0,460.9 238.5,460.7 240.0,459.8 241.5,459.4 243.0,459.2 244.5,458.5 246.0,457.9 247.5,457.4 249.0,457.2 250.5,456.5 252.0,457.0 253.5,458.1 255.0,459.3 256.5,460.6 258.0,462.8 259.5,465.1 261.0,467.6 262.5,469.1 264.0,470.4 265.5,471.7 267.0,473.2 268.5,474.7 270.0,476.2 271.5,477.6 273.0,478.6 274.5,479.4 276.0,479.9 277.5,481.3 279.0,481.9 280.5,482.9 282.0,483.7 283.5,484.8 285.0,485.4 286.5,486.3 288.0,487.1 289.5,487.8 291.0,488.9 292.5,489.4 294.0,490.0 295.5,490.7 297.0,491.7 298.5,492.2 300.0,492.7 301.5,493.7 303.0,494.3 304.5,495.2 306.0,495.3 307.5,496.2 309.0,497.0 310.5,497.7 312.0,498.4 313.5,498.5 315.0,499.3 316.5,499.8 318.0,500.5 319.5,501.7 321.0,502.1 322.5,502.9 324.0,503.2 325.5,504.2 327.0,504.6 328.5,505.1 330.0,506.1 331.5,506.8 333.0,507.0 334.5,507.9 336.0,508.4 337.5,508.6 339.0,509.2 340.5,509.5 342.0,510.0 343.5,510.6 345.0,511.2 346.5,510.5 348.0,508.6 349.5,506.8 351.0,505.3 352.5,503.8 354.0,501.8 355.5,500.2 357.0,498.5 358.5,497.1 360.0,495.3 361.5,493.4 363.0,491.8 364.5,490.3 366.0,488.8 367.5,487.6 369.0,486.1 370.5,484.9 372.0,484.1 373.5,482.7 375.0,481.4 376.5,480.3 378.0,479.9 379.5,478.8 381.0,478.2 382.5,477.3 384.0,476.6 385.5,476.2 387.0,475.5 388.5,474.4 390.0,473.6 391.5,473.3 393.0,472.3 394.5,471.6 396.0,471.5 397.5,470.5 399.0,470.1 400.5,469.3 402.0,468.9 403.5,468.2 405.0,467.5 406.5,467.0 408.0,466.9 409.5,466.5 411.0,466.3 412.5,465.3 414.0,465.2 415.5,464.6 417.0,464.2 418.5,463.4 420.0,463.0 421.5,462.6 423.0,462.3 424.5,461.3 426.0,461.0 427.5,460.7 429.0,460.3 430.5,459.4 432.0,458.9 433.5,458.9 435.0,458.4 436.5,457.6 438.0,456.9 439.5,456.9 441.0,456.6 442.5,458.1 444.0,459.0 445.5,460.9 447.0,462.8 448.5,465.5 450.0,467.4 451.5,469.0 453.0,470.6 454.5,472.0 456.0,473.1 457.5,474.5 459.0,476.0 460.5,477.5 462.0,478.3 463.5,479.0 465.0,480.0 466.5,481.2 468.0,482.2 469.5,482.6 471.0,483.8 472.5,484.8 474.0,485.3 475.5,486.7 477.0,487.0 478.5,488.0 480.0,488.7 481.5,489.4 483.0,489.9 484.5,490.7 486.0,491.5 487.5,492.1 489.0,492.9 490.5,493.5 492.0,494.2 493.5,494.6 495.0,495.6 496.5,496.2 498.0,496.7 499.5,497.6 501.0,498.3 502.5,498.8 504.0,499.2 505.5,500.1 507.0,500.5 508.5,501.2 510.0,502.0 511.5,502.4 513.0,503.3 514.5,504.0 516.0,504.3 517.5,505.4 519.0,505.7 520.5,506.7 522.0,507.4 523.5,507.8 525.0,508.0 526.5,508.8 528.0,509.2 529.5,510.0 531.0,510.0 532.5,510.9 534.0,511.5 535.5,510.6 537.0,508.9 538.5,506.9 540.0,505.7 541.5,503.7 543.0,502.3 544.5,500.5 546.0,498.4 547.5,497.1 549.0,495.6 550.5,493.4 552.0,491.9 553.5,490.5 555.0,488.5 556.5,487.8 558.0,486.2 559.5,485.3 561.0,483.7 562.5,482.7 564.0,481.8 565.5,480.2 567.0,479.5 568.5,478.9 570.0,478.1 571.5,477.1 573.0,476.5 574.5,475.7 576.0,475.5 577.5,474.6 579.0,474.0 580.5,472.9 582.0,472.7 583.5,471.6 585.0,471.2 586.5,470.7 588.0,469.9 589.5,469.5 591.0,468.7 592.5,468.2 594.0,468.0 595.5,467.1 597.0,467.2 598.5,466.5 600.0,466.0 601.5,465.8 603.0,465.0 604.5,465.0 606.0,464.2 607.5,463.5 609.0,463.3 610.5,462.5 612.0,461.9 613.5,461.7 615.0,460.7 616.5,460.7 618.0,459.9 619.5,459.7 621.0,459.4 622.5,458.7 624.0,458.2 625.5,457.5 627.0,456.9 628.5,456.4 630.0,456.5 631.5,457.9 633.0,458.9 634.5,460.7 636.0,463.3 637.5,465.1 639.0,467.4 640.5,469.1 642.0,470.1 643.5,471.5 645.0,473.2 646.5,474.4 648.0,476.0 649.5,477.3 651.0,478.4 652.5,479.3 654.0,480.0 655.5,481.1 657.0,482.0 658.5,482.7 660.0,484.0 661.5,484.5 663.0,485.4 664.5,486.3 666.0,487.3 667.5,488.2 669.0,488.8 670.5,489.3 672.0,489.9 673.5,490.5 675.0,491.5 676.5,492.2 678.0,492.8 679.5,493.6 681.0,494.2 682.5,495.1 684.0,495.7 685.5,496.0 687.0,497.1 688.5,497.2 690.0,498.1 691.5,498.7 693.0,499.3 694.5,499.8 696.0,500.9 697.5,501.1 699.0,502.1 700.5,502.9 702.0,503.1 703.5,503.8 705.0,504.7 706.5,505.3 708.0,506.0 709.5,506.8 711.0,507.0 712.5,507.7 714.0,508.2 715.5,508.5 717.0,509.5 718.5,509.9 720.0,510.4 721.5,510.4 723.0,511.4 724.5,510.6 726.0,508.7 727.5,507.2 729.0,505.3 730.5,503.5 732.0,501.7 733.5,500.1 735.0,498.4 736.5,496.9 738.0,495.5 739.5,493.8 741.0,492.2 742.5,490.5 744.0,488.6 745.5,487.6 747.0,486.3 748.5,485.3 750.0,484.0 751.5,482.6 753.0,481.6 754.5,480.7 756.0,479.5 757.5,479.1 759.0,477.9 760.5,477.3 762.0,476.5 763.5,476.1 765.0,475.5 766.5,474.6 768.0,473.7 769.5,473.4 771.0,472.4 772.5,471.7 774.0,471.5 775.5,470.7 777.0,470.1 778.5,469.4 780.0,469.0 781.5,468.2 783.0,468.0 784.5,467.4 786.0,467.1 787.5,466.4 789.0,466.2 790.5,465.6 792.0,465.0 793.5,464.5 795.0,464.2 796.5,463.4 798.0,463.3 799.5,462.4 801.0,461.8 802.5,461.3 804.0,461.3 805.5,460.4 807.0,459.8 808.5,459.3 810.0,458.8 811.5,458.7 813.0,458.2 814.5,457.8 816.0,457.3 817.5,456.4 819.0,456.7 820.5,457.7 822.0,459.2 823.5,460.9 825.0,463.3 826.5,465.1 828.0,467.8 829.5,469.3 831.0,470.7 832.5,471.6 834.0,473.1 835.5,474.4 837.0,475.8 838.5,477.7 840.0,478.6 841.5,479.3 843.0,480.4 844.5,481.2 846.0,481.9 847.5,482.6 849.0,483.5 850.5,484.8 852.0,485.4 853.5,486.4 855.0,487.2 856.5,487.7 858.0,488.5 859.5,489.2 861.0,490.2 862.5,490.7 864.0,491.3 865.5,492.4 867.0,492.8 868.5,493.8 870.0,494.3 871.5,494.6 873.0,495.5 874.5,496.1 876.0,497.0 877.5,497.4 879.0,498.3 880.5,498.8 882.0,499.3 883.5,500.3 885.0,500.5 886.5,501.6 888.0,501.8 889.5,502.4 891.0,503.1 892.5,504.1 894.0,504.9 895.5,505.0 897.0,505.9 898.5,506.6 900.0,507.4 901.5,507.6 903.0,508.3 904.5,508.7 906.0,509.5 907.5,509.6 909.0,510.5 910.5,510.6 912.0,511.0 913.5,510.6 915.0,508.7 916.5,506.8 918.0,505.4 919.5,503.4 921.0,502.2 922.5,500.4 924.0,498.8 925.5,497.0 927.0,495.2 928.5,493.6 930.0,491.9 931.5,490.6 933.0,488.5 934.5,487.8 936.0,486.1 937.5,485.0 939.0,483.8 940.5,483.0 942.0,481.5 943.5,480.3 945.0,479.9 946.5,478.8 948.0,478.1 949.5,477.4 951.0,476.8 952.5,476.1 954.0,475.3 955.5,474.4 957.0,473.7 958.5,472.9 960.0,472.7 961.5,472.0 963.0,471.4 964.5,470.4 966.0,469.9 967.5,469.5 969.0,468.7 970.5,468.0 972.0,467.7 973.5,467.6 975.0,466.7 976.5,466.3 978.0,465.9 979.5,465.7 981.0,465.4 982.5,464.5 984.0,464.0 985.5,463.5 987.0,463.0 988.5,462.6 990.0,461.8 991.5,461.4 993.0,460.8 994.5,460.8 996.0,460.2 997.5,459.3 999.0,459.4 1000.5,458.4 1002.0,458.1 1003.5,457.9 1005.0,457.3 1006.5,456.8 1008.0,456.6 1009.5,457.6 1011.0,459.0 1012.5,460.5 1014.0,462.9 1015.5,465.3 1017.0,467.3 1018.5,468.9 1020.0,470.6 1021.5,472.0 1023.0,473.3 1024.5,474.7 1026.0,476.1 1027.5,477.2 1029.0,478.4 1030.5,479.2 1032.0,480.3 1033.5,481.3 1035.0,481.9 1036.5,482.9 1038.0,483.9 1039.5,484.6 1041.0,485.4 1042.5,486.6 1044.0,487.5 1045.5,488.1 1047.0,488.8 1048.5,489.6 1050.0,490.2 1051.5,490.8 1053.0,491.4 1054.5,492.0 1056.0,492.9 1057.5,493.3 1059.0,494.2 1060.5,495.0 1062.0,495.7 1063.5,496.3 1065.0,496.7 1066.5,497.4 1068.0,498.1 1069.5,498.9 1071.0,499.4 1072.5,500.2 1074.0,501.0 1075.5,501.2 1077.0,502.1 1078.5,502.8 1080.0,503.3 1081.5,504.0 1083.0,504.9 1084.5,505.0 1086.0,506.0 1087.5,506.4 1089.0,507.4 1090.5,508.1 1092.0,508.3 1093.5,508.5 1095.0,509.3 1096.5,509.8 1098.0,510.4 1099.5,510.7 1101.0,511.3 1102.5,510.6 1104.0,508.8 1105.5,507.0 1107.0,505.6 1108.5,503.5 1110.0,502.1 1111.5,500.2 1113.0,498.8 1114.5,496.7 1116.0,495.6 1117.5,493.6 1119.0,491.7 1120.5,490.2 1122.0,488.7 1123.5,487.2 1125.0,486.3 1126.5,485.1 1128.0,484.1 1129.5,482.7 1131.0,481.4 1132.5,480.2 1134.0,479.8 1135.5,479.2 1137.0,478.2 1138.5,477.3 1140.0,476.9 1141.5,475.9 1143.0,475.0 1144.5,474.2 1146.0,474.0 1147.5,473.3 1149.0,472.6 1150.5,471.9 1152.0,471.3 1153.5,470.4 1155.0,470.2 1156.5,469.2 1158.0,468.8 1159.5,468.4 1161.0,467.9" fill="none" stroke="#2a2aff" stroke-width="3.4" stroke-linejoin="round"/><rect x="156.5" y="309" width="2" height="40" fill="#ff9d26"/><rect x="156.5" y="494" width="2" height="17" fill="#2a2aff"/><rect x="251.0" y="157" width="2" height="57" fill="#ff9d26"/><rect x="251.0" y="456" width="2" height="23" fill="#2a2aff"/><rect x="345.5" y="309" width="2" height="40" fill="#ff9d26"/><rect x="345.5" y="494" width="2" height="17" fill="#2a2aff"/><rect x="440.0" y="157" width="2" height="57" fill="#ff9d26"/><rect x="440.0" y="456" width="2" height="23" fill="#2a2aff"/><rect x="534.5" y="309" width="2" height="40" fill="#ff9d26"/><rect x="534.5" y="494" width="2" height="17" fill="#2a2aff"/><rect x="629.0" y="157" width="2" height="57" fill="#ff9d26"/><rect x="629.0" y="456" width="2" height="23" fill="#2a2aff"/><rect x="723.5" y="309" width="2" height="40" fill="#ff9d26"/><rect x="723.5" y="494" width="2" height="17" fill="#2a2aff"/><rect x="818.0" y="157" width="2" height="57" fill="#ff9d26"/><rect x="818.0" y="456" width="2" height="23" fill="#2a2aff"/><rect x="912.5" y="309" width="2" height="40" fill="#ff9d26"/><rect x="912.5" y="494" width="2" height="17" fill="#2a2aff"/><rect x="1007.0" y="157" width="2" height="57" fill="#ff9d26"/><rect x="1007.0" y="456" width="2" height="23" fill="#2a2aff"/><rect x="1101.5" y="309" width="2" height="40" fill="#ff9d26"/><rect x="1101.5" y="494" width="2" height="17" fill="#2a2aff"/><rect x="96" y="169" width="1065" height="3" fill="#ff0000"/><rect x="96" y="350" width="1065" height="3" fill="#ff0000"/><rect x="96" y="453" width="1065" height="3" fill="#ff0000"/><rect x="96" y="513" width="1065" height="3" fill="#ff0000"/><rect x="343" y="104" width="3" height="562" fill="#ff0000"/><rect x="532" y="104" width="3" height="562" fill="#ff0000"/><polygon points="96.5,480 111,487 96.5,494" fill="#0000ff" stroke="#222" stroke-width="0.8"/><polygon points="96.5,530 111,537 96.5,544" fill="#ff8c00" stroke="#222" stroke-width="0.8"/><polygon points="622,104 636,104 629,118" fill="#000"/><polygon points="1148,167 1161,158 1161,169" fill="#ff9d26" stroke="#222" stroke-width="0.7"/><polygon points="1148,255.5 1161,249 1161,262" fill="#ff9d26" stroke="#222" stroke-width="0.8"/><polygon points="1148,344 1161,341 1161,350" fill="#ff9d26" stroke="#222" stroke-width="0.7"/><path d="M1182.0,180.5 H1215 M1179.9,181.5 H1215 M1181.3,182.5 H1215 M1179.0,183.5 H1215 M1178.6,184.5 H1215 M1182.2,185.5 H1215 M1182.2,186.5 H1215 M1174.6,187.5 H1215 M1181.7,188.5 H1215 M1181.7,189.5 H1215 M1170.1,190.5 H1215 M1180.1,191.5 H1215 M1173.9,192.5 H1215 M1179.9,193.5 H1215 M1177.6,194.5 H1215 M1181.8,195.5 H1215 M1177.5,196.5 H1215 M1172.5,197.5 H1215 M1179.1,198.5 H1215 M1175.3,199.5 H1215 M1176.6,200.5 H1215 M1181.8,201.5 H1215 M1174.6,202.5 H1215 M1177.8,203.5 H1215 M1180.9,204.5 H1215 M1181.7,205.5 H1215 M1171.4,206.5 H1215 M1179.2,207.5 H1215 M1174.9,208.5 H1215 M1170.6,209.5 H1215 M1174.8,210.5 H1215 M1169.0,211.5 H1215 M1179.9,212.5 H1215 M1172.4,213.5 H1215 M1179.3,214.5 H1215 M1168.0,215.5 H1215 M1169.8,216.5 H1215 M1181.4,217.5 H1215 M1181.3,218.5 H1215 M1181.0,219.5 H1215 M1166.3,220.5 H1215 M1179.1,221.5 H1215 M1175.9,222.5 H1215 M1180.4,223.5 H1215 M1178.0,224.5 H1215 M1179.6,225.5 H1215 M1179.9,226.5 H1215 M1176.5,227.5 H1215 M1176.5,228.5 H1215 M1167.6,229.5 H1215 M1174.2,230.5 H1215 M1166.5,231.5 H1215 M1169.0,232.5 H1215 M1163.8,233.5 H1215 M1174.3,234.5 H1215 M1180.9,235.5 H1215 M1168.6,236.5 H1215 M1164.5,237.5 H1215 M1166.8,238.5 H1215 M1176.4,239.5 H1215 M1172.9,240.5 H1215 M1180.7,241.5 H1215 M1169.2,242.5 H1215 M1176.2,243.5 H1215 M1180.2,244.5 H1215 M1181.0,245.5 H1215 M1168.3,246.5 H1215 M1163.0,247.5 H1215 M1181.0,248.5 H1215 M1170.0,249.5 H1215 M1178.8,250.5 H1215 M1180.8,251.5 H1215 M1180.0,252.5 H1215 M1171.0,253.5 H1215 M1167.4,254.5 H1215 M1181.0,255.5 H1215 M1175.1,256.5 H1215 M1181.0,257.5 H1215 M1172.4,258.5 H1215 M1179.7,259.5 H1215 M1167.0,260.5 H1215 M1163.0,261.5 H1215 M1177.3,262.5 H1215 M1163.0,263.5 H1215 M1179.9,264.5 H1215 M1181.0,265.5 H1215 M1175.5,266.5 H1215 M1181.0,267.5 H1215 M1180.6,268.5 H1215 M1178.8,269.5 H1215 M1175.3,270.5 H1215 M1180.8,271.5 H1215 M1181.0,272.5 H1215 M1167.7,273.5 H1215 M1179.9,274.5 H1215 M1164.2,275.5 H1215 M1166.7,276.5 H1215 M1179.3,277.5 H1215 M1178.2,278.5 H1215 M1177.2,279.5 H1215 M1174.7,280.5 H1215 M1175.8,281.5 H1215 M1176.6,282.5 H1215 M1175.4,283.5 H1215 M1165.5,284.5 H1215 M1177.6,285.5 H1215 M1178.8,286.5 H1215 M1173.0,287.5 H1215 M1180.6,288.5 H1215 M1180.2,289.5 H1215 M1164.5,290.5 H1215 M1177.6,291.5 H1215 M1177.1,292.5 H1215 M1181.3,293.5 H1215 M1179.2,294.5 H1215 M1176.7,295.5 H1215 M1181.3,296.5 H1215 M1176.0,297.5 H1215 M1175.8,298.5 H1215 M1181.3,299.5 H1215 M1176.0,300.5 H1215 M1178.8,301.5 H1215 M1175.0,302.5 H1215 M1180.1,303.5 H1215 M1174.5,304.5 H1215 M1173.8,305.5 H1215 M1181.5,306.5 H1215 M1181.5,307.5 H1215 M1175.5,308.5 H1215 M1167.4,309.5 H1215 M1181.0,310.5 H1215 M1179.3,311.5 H1215 M1177.3,312.5 H1215 M1180.7,313.5 H1215 M1180.4,314.5 H1215 M1180.8,315.5 H1215 M1180.4,316.5 H1215 M1177.6,317.5 H1215 M1181.0,318.5 H1215 M1180.4,319.5 H1215 M1174.4,320.5 H1215 M1181.8,321.5 H1215 M1178.4,322.5 H1215 M1175.5,323.5 H1215 M1181.1,324.5 H1215 M1181.6,325.5 H1215 M1174.3,326.5 H1215 M1181.6,327.5 H1215 M1181.8,328.5 H1215 M1180.3,329.5 H1215 M1176.9,330.5 H1215 M1182.0,331.5 H1215 M1181.3,332.5 H1215 M1181.3,333.5 H1215 M1174.7,334.5 H1215 M1180.6,335.5 H1215 M1174.5,336.5 H1215 M1182.1,337.5 H1215 M1181.5,338.5 H1215 M1178.5,339.5 H1215 M1174.4,340.5 H1215" stroke="#ff9d26" stroke-width="1" fill="none"/><rect x="1211" y="155" width="4" height="6" fill="#ff9d26"/><path d="M1185.0,463.5 H1215 M1182.8,464.5 H1215 M1181.3,465.5 H1215 M1177.2,466.5 H1215 M1181.6,467.5 H1215 M1176.5,468.5 H1215 M1187.7,469.5 H1215 M1185.3,470.5 H1215 M1174.1,471.5 H1215 M1181.8,472.5 H1215 M1174.6,473.5 H1215 M1187.2,474.5 H1215 M1184.4,475.5 H1215 M1186.6,476.5 H1215 M1183.0,477.5 H1215 M1182.3,478.5 H1215 M1187.1,479.5 H1215 M1186.6,480.5 H1215 M1186.1,481.5 H1215 M1171.6,482.5 H1215 M1177.0,483.5 H1215 M1186.8,484.5 H1215 M1176.1,485.5 H1215 M1186.9,486.5 H1215 M1181.2,487.5 H1215 M1187.0,488.5 H1215 M1187.1,489.5 H1215 M1174.4,490.5 H1215 M1186.9,491.5 H1215 M1186.9,492.5 H1215 M1171.6,493.5 H1215 M1175.9,494.5 H1215 M1186.8,495.5 H1215 M1174.1,496.5 H1215 M1184.5,497.5 H1215 M1182.4,498.5 H1215 M1187.6,499.5 H1215 M1177.3,500.5 H1215 M1183.3,501.5 H1215 M1178.0,502.5 H1215" stroke="#2a2aff" stroke-width="1" fill="none"/><rect x="1163" y="475" width="25" height="1" fill="#2a2aff"/></g></svg>
<div class="t" style="left:8px;top:5px;">File</div><div class="t" style="left:44px;top:5px;">Control</div><div class="t" style="left:101px;top:5px;">View</div><div class="t" style="left:145px;top:5px;">Window</div><div style="position:absolute;left:1895px;top:2px;width:17px;height:17px;box-sizing:border-box;background:#fff;border:1px solid #d8d8d8;border-radius:3px;"></div><div style="position:absolute;left:2px;top:24px;width:51px;height:21px;box-sizing:border-box;background:#e5f1fb;border:1px solid #cce4f7;border-radius:3px;"></div><div style="position:absolute;left:1030px;top:24px;width:71px;height:21px;box-sizing:border-box;background:#cce8ff;border:1px solid #99d1ff;border-radius:3px;"></div><div style="position:absolute;left:1101px;top:24px;width:71px;height:21px;box-sizing:border-box;background:#cce8ff;border:1px solid #99d1ff;border-radius:3px;"></div><div class="t" style="left:9px;top:29px;">Export</div><div class="t" style="left:60px;top:29px;">Rec.</div><div class="t" style="left:107px;top:29px;">+XY</div><div class="t" style="left:145px;top:29px;">+XYZ</div><div class="t" style="left:190px;top:29px;">+XYZ 3D</div><div class="t" style="left:254px;top:29px;">+Zoom</div><div class="t" style="left:309px;top:29px;">FFT</div><div class="t" style="left:346px;top:29px;">Spectrogram</div><div class="t" style="left:435px;top:29px;">Spectrogram 3D</div><div class="t" style="left:543px;top:29px;">Histogram</div><div class="t" style="left:616px;top:29px;">Persistence</div><div class="t" style="left:696px;top:29px;">Eye</div><div class="t" style="left:731px;top:29px;">Data</div><div class="t" style="left:772px;top:29px;">Measurements</div><div class="t" style="left:871px;top:29px;">Logging</div><div class="t" style="left:930px;top:29px;">Counter</div><div class="t" style="left:990px;top:29px;">Audio</div><div class="t" style="left:1037px;top:29px;">X Cursors</div><div class="t" style="left:1108px;top:29px;">Y Cursors</div><div class="t" style="left:1178px;top:29px;">Notes</div><div class="t" style="left:1232px;top:29px;">Digital</div><div class="t" style="left:1282px;top:29px;color:#8c8c8c;">Measurements</div><div style="position:absolute;left:3px;top:51px;width:91px;height:26px;box-sizing:border-box;background:#fcfcfc;border:1px solid #d2d2d2;border-radius:4px;"></div><div style="position:absolute;left:97px;top:51px;width:91px;height:26px;box-sizing:border-box;background:#fcfcfc;border:1px solid #d2d2d2;border-radius:4px;"></div><div class="t" style="left:30px;top:58px;">Single</div><div class="t" style="left:123px;top:58px;">Run</div><div class="t" style="left:221px;top:58px;">Buffer:</div><div style="position:absolute;left:278px;top:54px;width:86px;height:21px;box-sizing:border-box;background:#fff;border-bottom:1px solid #7a7a7a;"></div><div class="t" style="left:281px;top:58px;">10</div><div style="position:absolute;left:348px;top:56px;width:15px;height:17px;box-sizing:border-box;background:#fafafa;border:1px solid #dcdcdc;border-radius:2px;"></div><div class="t" style="left:397px;top:58px;">Mode:</div><div style="position:absolute;left:453px;top:54px;width:117px;height:21px;box-sizing:border-box;background:#fdfdfd;border:1px solid #d3d3d3;border-bottom-color:#c4c4c4;border-radius:2px;"></div><div class="t" style="left:477px;top:58px;color:#000;">Repeated</div><div class="t" style="left:575px;top:58px;">Trigger:</div><div style="position:absolute;left:631px;top:54px;width:88px;height:21px;box-sizing:border-box;background:#fdfdfd;border:1px solid #d3d3d3;border-bottom-color:#c4c4c4;border-radius:2px;"></div><div class="t" style="left:635px;top:58px;color:#000;">Auto</div><div class="t" style="left:751px;top:58px;">Source:</div><div style="position:absolute;left:807px;top:54px;width:117px;height:21px;box-sizing:border-box;background:#fdfdfd;border:1px solid #d3d3d3;border-bottom-color:#c4c4c4;border-radius:2px;"></div><div class="t" style="left:831px;top:58px;color:#000;">Channel 1</div><div style="position:absolute;left:813px;top:57px;width:14px;height:14px;box-sizing:border-box;background:#ff8c00;"></div><div class="t" style="left:929px;top:58px;">Type:</div><div style="position:absolute;left:985px;top:54px;width:87px;height:21px;box-sizing:border-box;background:#fdfdfd;border:1px solid #d3d3d3;border-bottom-color:#c4c4c4;border-radius:2px;"></div><div class="t" style="left:1009px;top:58px;color:#000;">Edge</div><div class="t" style="left:1077px;top:58px;">Condition:</div><div style="position:absolute;left:1157px;top:54px;width:94px;height:21px;box-sizing:border-box;background:#fdfdfd;border:1px solid #d3d3d3;border-bottom-color:#c4c4c4;border-radius:2px;"></div><div class="t" style="left:1181px;top:58px;color:#000;">Rising</div><div class="t" style="left:1256px;top:58px;">Level:</div><div style="position:absolute;left:1312px;top:54px;width:87px;height:21px;box-sizing:border-box;background:#fff;border:1px solid #e6e6e6;border-bottom:1px solid #868686;border-radius:2px;"></div><div class="t" style="left:1317px;top:58px;color:#000;width:61px;overflow:hidden;height:16px;">5 V</div><div class="t" style="left:1404px;top:58px;">Hyst.:</div><div style="position:absolute;left:1461px;top:54px;width:87px;height:21px;box-sizing:border-box;background:#fff;border:1px solid #e6e6e6;border-bottom:1px solid #868686;border-radius:2px;"></div><div class="t" style="left:1465px;top:58px;color:#000;width:62px;overflow:hidden;height:16px;">1.6 V</div><div class="t" style="left:1553px;top:58px;color:#6d6d6d;">LCondition:</div><div style="position:absolute;left:1634px;top:54px;width:92px;height:21px;box-sizing:border-box;background:#f4f4f4;border:1px solid #e3e3e3;border-bottom-color:#e3e3e3;border-radius:2px;"></div><div class="t" style="left:1657px;top:58px;color:#8a8a8a;">Timeout</div><div class="t" style="left:1731px;top:58px;color:#6d6d6d;">Length:</div><div style="position:absolute;left:1788px;top:54px;width:87px;height:21px;box-sizing:border-box;background:#f4f4f4;border:1px solid #e3e3e3;border-bottom-color:#e3e3e3;border-radius:2px;"></div><div class="t" style="left:1792px;top:58px;color:#8a8a8a;">0 s</div><div class="t" style="left:1888px;top:58px;">...</div><div style="position:absolute;left:120px;top:80px;width:96px;height:24px;box-sizing:border-box;border:2px solid #ff0000;"></div><div class="t" style="left:18px;width:300px;text-align:center;top:86px;font-weight:bold;">Ready</div><div class="t" style="left:220px;top:86px;color:#ff8c00;font-weight:bold;">C1</div><div style="position:absolute;left:240px;top:80px;width:26px;height:24px;box-sizing:border-box;border:1px solid #0000ff;"></div><div class="t" style="left:244px;top:86px;color:#0000ff;font-weight:bold;">C2</div><div class="t" style="left:270px;top:86px;font-size:12.6px;line-height:12.6px;">16384 samples at 800 kHz</div><div class="t" style="left:429px;top:86px;color:#555;">|</div><div class="t" style="left:438px;top:86px;">2025-11-25 22:37:28.887.303.130</div><div class="t" style="left:0px;top:86px;color:#ff8c00;">C1 V</div><div class="t" style="left:49px;top:86px;color:#0000ff;">C2 V</div><div class="t" style="left:2px;top:106px;color:#ff8c00;">7.7</div><div class="t" style="left:50px;top:106px;color:#0000ff;">6.8</div><div class="t" style="left:2px;top:160px;color:#ff8c00;">6.7</div><div class="t" style="left:50px;top:160px;color:#0000ff;">5.8</div><div class="t" style="left:2px;top:215px;color:#ff8c00;">5.7</div><div class="t" style="left:50px;top:215px;color:#0000ff;">4.8</div><div class="t" style="left:2px;top:270px;color:#ff8c00;">4.7</div><div class="t" style="left:50px;top:270px;color:#0000ff;">3.8</div><div class="t" style="left:2px;top:325px;color:#ff8c00;">3.7</div><div class="t" style="left:50px;top:325px;color:#0000ff;">2.8</div><div class="t" style="left:2px;top:379px;color:#ff8c00;">2.7</div><div class="t" style="left:50px;top:379px;color:#0000ff;">1.8</div><div class="t" style="left:2px;top:434px;color:#ff8c00;">1.7</div><div class="t" style="left:50px;top:434px;color:#0000ff;">0.8</div><div class="t" style="left:2px;top:489px;color:#ff8c00;">0.7</div><div class="t" style="left:48px;top:489px;color:#0000ff;">-0.2</div><div class="t" style="left:2px;top:543px;color:#ff8c00;">-0.3</div><div class="t" style="left:48px;top:543px;color:#0000ff;">-1.2</div><div class="t" style="left:2px;top:598px;color:#ff8c00;">-1.3</div><div class="t" style="left:48px;top:598px;color:#0000ff;">-2.2</div><div class="t" style="left:2px;top:653px;color:#ff8c00;">-2.3</div><div class="t" style="left:48px;top:653px;color:#0000ff;">-3.2</div><div style="position:absolute;left:1054px;top:81px;width:30px;height:22px;box-sizing:border-box;background:#cce4f7;border:1.5px solid #2a6fb5;border-radius:4px;"></div><div style="position:absolute;left:1137px;top:81px;width:24px;height:22px;box-sizing:border-box;background:#f6f6f6;border:1px solid #dcdcdc;border-radius:3px;"></div><div style="position:absolute;left:1164px;top:81px;width:51px;height:22px;box-sizing:border-box;background:#fbfbfb;border:1px solid #dcdcdc;border-radius:4px;"></div><div class="t" style="left:1032px;width:300px;text-align:center;top:86px;font-weight:bold;">Y</div><div style="position:absolute;left:1199px;top:84px;width:1px;height:16px;box-sizing:border-box;background:#7a7a7a;"></div><div class="t" style="left:1108px;top:611px;">X: 10 ms</div><div class="t" style="left:84px;top:673px;">-10 ms</div><div class="t" style="left:190px;top:673px;">-8 ms</div><div class="t" style="left:297px;top:673px;">-6 ms</div><div class="t" style="left:403px;top:673px;">-4 ms</div><div class="t" style="left:510px;top:673px;">-2 ms</div><div class="t" style="left:616px;top:673px;">0 ms</div><div class="t" style="left:723px;top:673px;">2 ms</div><div class="t" style="left:829px;top:673px;">4 ms</div><div class="t" style="left:936px;top:673px;">6 ms</div><div class="t" style="left:1042px;top:673px;">8 ms</div><div class="t" style="left:1149px;top:673px;">10 ms</div><div style="position:absolute;left:1164px;top:160px;width:51px;height:21px;box-sizing:border-box;background:#fbfbfb;border:1px solid #d8d8d8;border-radius:4px;"></div><div style="position:absolute;left:1200px;top:163px;width:1px;height:15px;box-sizing:border-box;background:#6a6a6a;"></div><div class="t" style="left:1032.0px;width:300px;text-align:center;top:164px;">2&Delta;1</div><div style="position:absolute;left:1164px;top:341px;width:51px;height:21px;box-sizing:border-box;background:#fbfbfb;border:1px solid #d8d8d8;border-radius:4px;"></div><div style="position:absolute;left:1200px;top:344px;width:1px;height:15px;box-sizing:border-box;background:#6a6a6a;"></div><div class="t" style="left:1032.0px;width:300px;text-align:center;top:345px;">1</div><div style="position:absolute;left:1164px;top:443px;width:51px;height:22px;box-sizing:border-box;background:#fbfbfb;border:1px solid #d8d8d8;border-radius:4px;"></div><div style="position:absolute;left:1200px;top:446px;width:1px;height:16px;box-sizing:border-box;background:#6a6a6a;"></div><div class="t" style="left:1032.0px;width:300px;text-align:center;top:447px;">4&Delta;3</div><div style="position:absolute;left:1164px;top:504px;width:51px;height:21px;box-sizing:border-box;background:#cce4f7;border:1px solid #3a7bbf;border-radius:4px;"></div><div style="position:absolute;left:1200px;top:507px;width:1px;height:15px;box-sizing:border-box;background:#6a6a6a;"></div><div class="t" style="left:1032.0px;width:300px;text-align:center;top:508px;">3&Delta;4</div><div style="position:absolute;left:1px;top:669px;width:34px;height:21px;box-sizing:border-box;background:#fbfbfb;border:1px solid #d8d8d8;border-radius:4px;"></div><div class="t" style="left:-140px;width:300px;text-align:center;top:673px;font-weight:bold;font-size:14px;">X</div><div style="position:absolute;left:19px;top:671px;width:1px;height:17px;box-sizing:border-box;background:#6a6a6a;"></div><div style="position:absolute;left:318px;top:669px;width:52px;height:21px;box-sizing:border-box;background:#fbfbfb;border:1px solid #d8d8d8;border-radius:4px;"></div><div style="position:absolute;left:355px;top:672px;width:1px;height:15px;box-sizing:border-box;background:#6a6a6a;"></div><div class="t" style="left:186.5px;width:300px;text-align:center;top:673px;">1&Delta;2</div><div style="position:absolute;left:507px;top:668px;width:52px;height:22px;box-sizing:border-box;background:#cce4f7;border:1px solid #3a7bbf;border-radius:4px;"></div><div style="position:absolute;left:544px;top:671px;width:1px;height:16px;box-sizing:border-box;background:#6a6a6a;"></div><div class="t" style="left:375.5px;width:300px;text-align:center;top:672px;">2&Delta;1</div><div class="t" style="left:1226px;top:85px;">Y Cursors</div><div class="t" style="left:1249px;top:111px;">Normal</div><div class="t" style="left:1309px;top:111px;">Delta</div><div class="t" style="left:1371px;top:111px;">Clear</div><div class="t" style="left:1447px;top:111px;">Show</div><div class="t" style="left:1120px;width:300px;text-align:center;top:139px;">Channel</div><div class="t" style="left:1217px;width:300px;text-align:center;top:139px;">Position</div><div class="t" style="left:1314px;width:300px;text-align:center;top:139px;">Ref</div><div class="t" style="left:1410px;width:300px;text-align:center;top:139px;">&Delta;</div><div class="t" style="left:1227px;top:165px;">1</div><div style="position:absolute;left:1241px;top:159px;width:58px;height:21px;box-sizing:border-box;background:#fdfdfd;border:1px solid #d3d3d3;border-bottom-color:#c4c4c4;border-radius:2px;"></div><div class="t" style="left:1245px;top:163px;color:#000;">C1</div><div style="position:absolute;left:1302px;top:159px;width:131px;height:21px;box-sizing:border-box;background:#fff;border:1px solid #e6e6e6;border-bottom:1px solid #868686;border-radius:2px;"></div><div class="t" style="left:1306px;top:163px;color:#000;width:106px;overflow:hidden;height:16px;">3.287188612 V</div><div style="position:absolute;left:1436px;top:159px;width:56px;height:21px;box-sizing:border-box;background:#fdfdfd;border:1px solid #d3d3d3;border-bottom-color:#c4c4c4;border-radius:2px;"></div><div class="t" style="left:1440px;top:163px;color:#000;">none</div><div style="position:absolute;left:1495px;top:159px;width:131px;height:21px;box-sizing:border-box;background:#f7f7f7;border:1px solid #ececec;border-radius:3px;"></div><div style="position:absolute;left:1497px;top:161px;width:104px;height:17px;background:#eeeeee;"></div><div class="t" style="left:1499px;top:163px;color:#8a8a8a;">-3.3985765125 V</div><div class="t" style="left:1227px;top:191px;">2</div><div style="position:absolute;left:1241px;top:185px;width:58px;height:21px;box-sizing:border-box;background:#fdfdfd;border:1px solid #d3d3d3;border-bottom-color:#c4c4c4;border-radius:2px;"></div><div class="t" style="left:1245px;top:189px;color:#000;">C1</div><div style="position:absolute;left:1302px;top:185px;width:131px;height:21px;box-sizing:border-box;background:#fff;border:1px solid #e6e6e6;border-bottom:1px solid #868686;border-radius:2px;"></div><div class="t" style="left:1306px;top:189px;color:#000;width:106px;overflow:hidden;height:16px;">6.507829181 V</div><div style="position:absolute;left:1436px;top:185px;width:56px;height:21px;box-sizing:border-box;background:#fdfdfd;border:1px solid #d3d3d3;border-bottom-color:#c4c4c4;border-radius:2px;"></div><div class="t" style="left:1440px;top:189px;color:#000;">1</div><div style="position:absolute;left:1495px;top:185px;width:131px;height:21px;box-sizing:border-box;background:#fff;border:1px solid #e6e6e6;border-bottom:1px solid #868686;border-radius:2px;"></div><div class="t" style="left:1499px;top:189px;color:#000;width:106px;overflow:hidden;height:16px;">3.220640569 V</div><div class="t" style="left:1227px;top:217px;">3</div><div style="position:absolute;left:1241px;top:211px;width:58px;height:21px;box-sizing:border-box;background:#fdfdfd;border:1px solid #d3d3d3;border-bottom-color:#c4c4c4;border-radius:2px;"></div><div class="t" style="left:1245px;top:215px;color:#000;">C2</div><div style="position:absolute;left:1302px;top:211px;width:131px;height:21px;box-sizing:border-box;background:#fff;border:1px solid #e6e6e6;border-bottom:1px solid #868686;border-radius:2px;"></div><div class="t" style="left:1306px;top:215px;color:#000;width:106px;overflow:hidden;height:16px;">-513.167259786 m</div><div style="position:absolute;left:1436px;top:211px;width:56px;height:21px;box-sizing:border-box;background:#fdfdfd;border:1px solid #d3d3d3;border-bottom-color:#c4c4c4;border-radius:2px;"></div><div class="t" style="left:1440px;top:215px;color:#000;">4</div><div style="position:absolute;left:1495px;top:211px;width:131px;height:21px;box-sizing:border-box;background:#fff;border:1px solid #e6e6e6;border-bottom:1px solid #868686;border-radius:2px;"></div><div class="t" style="left:1499px;top:215px;color:#000;width:106px;overflow:hidden;height:16px;">-1.0676156584 V</div><div class="t" style="left:1227px;top:243px;">4</div><div style="position:absolute;left:1241px;top:237px;width:58px;height:21px;box-sizing:border-box;background:#fdfdfd;border:1px solid #d3d3d3;border-bottom-color:#c4c4c4;border-radius:2px;"></div><div class="t" style="left:1245px;top:241px;color:#000;">C2</div><div style="position:absolute;left:1302px;top:237px;width:131px;height:21px;box-sizing:border-box;background:#fff;border:1px solid #e6e6e6;border-bottom:1px solid #868686;border-radius:2px;"></div><div class="t" style="left:1306px;top:241px;color:#000;width:106px;overflow:hidden;height:16px;">554.4483986 mV</div><div style="position:absolute;left:1436px;top:237px;width:56px;height:21px;box-sizing:border-box;background:#fdfdfd;border:1px solid #d3d3d3;border-bottom-color:#c4c4c4;border-radius:2px;"></div><div class="t" style="left:1440px;top:241px;color:#000;">3</div><div style="position:absolute;left:1495px;top:237px;width:131px;height:21px;box-sizing:border-box;background:#fff;border:1px solid #e6e6e6;border-bottom:1px solid #868686;border-radius:2px;"></div><div class="t" style="left:1499px;top:241px;color:#000;width:106px;overflow:hidden;height:16px;">1.067615658 V</div><div style="position:absolute;left:1695px;top:102px;width:192px;height:97px;box-sizing:border-box;border:4px solid #000;"></div><div class="t" style="left:1721px;top:110px;">Time</div><div style="position:absolute;left:1858px;top:107px;width:24px;height:18px;box-sizing:border-box;background:#f8f8f8;border:1px solid #d8d8d8;border-radius:3px;"></div><div class="t" style="left:1704px;top:132px;">Position:</div><div style="position:absolute;left:1773px;top:128px;width:109px;height:21px;box-sizing:border-box;background:#fff;border:1px solid #e6e6e6;border-bottom:1px solid #868686;border-radius:2px;"></div><div class="t" style="left:1777px;top:132px;color:#000;width:84px;overflow:hidden;height:16px;">0 s</div><div class="t" style="left:1704px;top:155px;">Base:</div><div style="position:absolute;left:1773px;top:151px;width:109px;height:21px;box-sizing:border-box;background:#fff;border:1px solid #e6e6e6;border-bottom:1px solid #868686;border-radius:2px;"></div><div class="t" style="left:1777px;top:155px;color:#000;width:84px;overflow:hidden;height:16px;">2 ms/div</div><div style="position:absolute;left:1700px;top:173px;width:182px;height:20px;box-sizing:border-box;background:#cce8ff;border:1px solid #99d1ff;border-radius:3px;"></div><div class="t" style="left:1723px;top:178px;">Rate, Samples...</div><div class="t" style="left:1722px;top:208px;">Options</div><div style="position:absolute;left:1697px;top:230px;width:189px;height:27px;box-sizing:border-box;background:#fafafa;border:1px solid #d8d8d8;border-radius:4px;"></div><div class="t" style="left:1723px;top:238px;">Add Channel</div><div style="position:absolute;left:1695px;top:259px;width:192px;height:75px;box-sizing:border-box;border:4px solid #ff8c00;"></div><div class="t" style="left:1721px;top:267px;">Channel 1 (1&plusmn;)</div><div style="position:absolute;left:1858px;top:264px;width:24px;height:18px;box-sizing:border-box;background:#f8f8f8;border:1px solid #d8d8d8;border-radius:3px;"></div><div class="t" style="left:1704px;top:289px;">Offset:</div><div style="position:absolute;left:1773px;top:285px;width:109px;height:21px;box-sizing:border-box;background:#fff;border:1px solid #e6e6e6;border-bottom:1px solid #868686;border-radius:2px;"></div><div class="t" style="left:1777px;top:289px;color:#000;width:84px;overflow:hidden;height:16px;">-2.7 V</div><div class="t" style="left:1704px;top:312px;">Range:</div><div style="position:absolute;left:1773px;top:308px;width:109px;height:21px;box-sizing:border-box;background:#fff;border:1px solid #e6e6e6;border-bottom:1px solid #868686;border-radius:2px;"></div><div class="t" style="left:1777px;top:312px;color:#000;width:84px;overflow:hidden;height:16px;">1 V/div</div><div style="position:absolute;left:1695px;top:335px;width:192px;height:75px;box-sizing:border-box;border:4px solid #0000ff;"></div><div class="t" style="left:1721px;top:343px;">Channel 2 (2&plusmn;)</div><div style="position:absolute;left:1858px;top:340px;width:24px;height:18px;box-sizing:border-box;background:#f8f8f8;border:1px solid #d8d8d8;border-radius:3px;"></div><div class="t" style="left:1704px;top:365px;">Offset:</div><div style="position:absolute;left:1773px;top:361px;width:109px;height:21px;box-sizing:border-box;background:#fff;border:1px solid #e6e6e6;border-bottom:1px solid #868686;border-radius:2px;"></div><div class="t" style="left:1777px;top:365px;color:#000;width:84px;overflow:hidden;height:16px;">-1.8 V</div><div class="t" style="left:1704px;top:388px;">Range:</div><div style="position:absolute;left:1773px;top:384px;width:109px;height:21px;box-sizing:border-box;background:#fff;border:1px solid #e6e6e6;border-bottom:1px solid #868686;border-radius:2px;"></div><div class="t" style="left:1777px;top:388px;color:#000;width:84px;overflow:hidden;height:16px;">1 V/div</div><div style="position:absolute;left:1698px;top:411px;width:74px;height:23px;box-sizing:border-box;background:#cce8ff;border:1px solid #99d1ff;border-radius:3px;"></div><div class="t" style="left:1724px;top:418px;">Filters</div><div style="position:absolute;left:1774px;top:411px;width:112px;height:23px;box-sizing:border-box;background:#cce8ff;border:1px solid #99d1ff;border-radius:3px;"></div><div class="t" style="left:1800px;top:418px;">Wavegens</div><div class="t" style="left:4px;top:701px;">X Cursors</div><div class="t" style="left:27px;top:727px;">Normal</div><div class="t" style="left:88px;top:727px;">Delta</div><div class="t" style="left:150px;top:727px;">Clear</div><div class="t" style="left:225px;top:727px;">Show</div><div class="t" style="left:-21px;width:300px;text-align:center;top:755px;">Position</div><div class="t" style="left:120px;width:300px;text-align:center;top:755px;">Ref</div><div class="t" style="left:260px;width:300px;text-align:center;top:755px;">&Delta; X</div><div class="t" style="left:482px;width:300px;text-align:center;top:755px;">1/&Delta;X</div><div class="t" style="left:704px;width:300px;text-align:center;top:755px;">C1</div><div class="t" style="left:925px;width:300px;text-align:center;top:755px;">C1 &Delta;Y</div><div class="t" style="left:1146px;width:300px;text-align:center;top:755px;">C2</div><div class="t" style="left:1367px;width:300px;text-align:center;top:755px;">C2 &Delta;Y</div><div class="t" style="left:6px;top:781px;">1</div><div style="position:absolute;left:20px;top:775px;width:219px;height:21px;box-sizing:border-box;background:#fff;border:1px solid #e6e6e6;border-bottom:1px solid #868686;border-radius:2px;"></div><div class="t" style="left:24px;top:779px;color:#000;width:194px;overflow:hidden;height:16px;">-5.329215565 ms</div><div style="position:absolute;left:242px;top:775px;width:56px;height:21px;box-sizing:border-box;background:#fdfdfd;border:1px solid #d3d3d3;border-bottom-color:#c4c4c4;border-radius:2px;"></div><div class="t" style="left:245px;top:779px;color:#000;">2</div><div style="position:absolute;left:301px;top:775px;width:219px;height:21px;box-sizing:border-box;background:#fff;border:1px solid #e6e6e6;border-bottom:1px solid #868686;border-radius:2px;"></div><div class="t" style="left:305px;top:779px;color:#000;width:194px;overflow:hidden;height:16px;">-3.542927733 ms</div><div class="t" style="left:525px;top:780px;">-282.25244 Hz</div><div class="t" style="left:747px;top:780px;">3.34524 V</div><div class="t" style="left:968px;top:780px;">-22.3635 mV</div><div class="t" style="left:1189px;top:780px;">-0.483767 V</div><div class="t" style="left:1410px;top:780px;">196.7 uV</div><div class="t" style="left:6px;top:807px;">2</div><div style="position:absolute;left:20px;top:801px;width:219px;height:21px;box-sizing:border-box;background:#fff;border:1px solid #e6e6e6;border-bottom:1px solid #868686;border-radius:2px;"></div><div class="t" style="left:24px;top:805px;color:#000;width:194px;overflow:hidden;height:16px;">-1.786287832 ms</div><div style="position:absolute;left:242px;top:801px;width:56px;height:21px;box-sizing:border-box;background:#fdfdfd;border:1px solid #d3d3d3;border-bottom-color:#c4c4c4;border-radius:2px;"></div><div class="t" style="left:245px;top:805px;color:#000;">1</div><div style="position:absolute;left:301px;top:801px;width:219px;height:21px;box-sizing:border-box;background:#fff;border:1px solid #e6e6e6;border-bottom:1px solid #868686;border-radius:2px;"></div><div class="t" style="left:305px;top:805px;color:#000;width:194px;overflow:hidden;height:16px;">3.542927733 ms</div><div class="t" style="left:525px;top:806px;">282.25 Hz</div><div class="t" style="left:747px;top:806px;">3.3676 V</div><div class="t" style="left:968px;top:806px;">22.36 mV</div><div class="t" style="left:1189px;top:806px;">-0.483964 V</div><div class="t" style="left:1410px;top:806px;">-196.7034 uV</div>
<svg width="1914" height="939" viewBox="0 0 1914 939" style="pointer-events:none"><defs>
<linearGradient id="igtri" x1="0" y1="0" x2="0" y2="1"><stop offset="0" stop-color="#3a9a3a"/><stop offset="1" stop-color="#1a6e1a"/></linearGradient>
<linearGradient id="igplus" x1="0" y1="0" x2="0" y2="1"><stop offset="0" stop-color="#a6ec8c"/><stop offset="0.5" stop-color="#72d24e"/><stop offset="1" stop-color="#3cb81e"/></linearGradient>
<linearGradient id="irpill" x1="0" y1="0" x2="0" y2="1"><stop offset="0" stop-color="#f08a8a"/><stop offset="0.5" stop-color="#d62a2a"/><stop offset="1" stop-color="#9a1010"/></linearGradient>
<linearGradient id="igear" x1="0" y1="0" x2="1" y2="1"><stop offset="0" stop-color="#f2f4f5"/><stop offset="1" stop-color="#b4bbc1"/></linearGradient>
<linearGradient id="igarr" x1="0" y1="0" x2="1" y2="0"><stop offset="0" stop-color="#9fdc8a"/><stop offset="1" stop-color="#3f9f35"/></linearGradient>
<linearGradient id="ixred" x1="0" y1="0" x2="1" y2="1"><stop offset="0" stop-color="#f08080"/><stop offset="1" stop-color="#c01010"/></linearGradient>
<linearGradient id="ihmr" x1="0" y1="0" x2="1" y2="0"><stop offset="0" stop-color="#a88a52"/><stop offset="0.5" stop-color="#8a6a30"/><stop offset="1" stop-color="#b09a6a"/></linearGradient>
</defs><g transform="translate(1897,5)"><rect x="0.5" y="0.5" width="9" height="7" fill="#dfe9f8" stroke="#5f8fd0"/><rect x="3.5" y="3.5" width="10" height="8" fill="#eef3fb" stroke="#5f8fd0"/><rect x="3.5" y="3.5" width="10" height="2" fill="#7aa2db"/></g><polygon points="7,55 25,63.5 7,72" fill="url(#igtri)" stroke="#1d6b1d" stroke-width="0.6" stroke-linejoin="round"/><path d="M10.6,57.8 H13.2 V66 H14.6 V68 H9 V66 H10.6 V60.6 L9,61.4 V59.3 Z" fill="#ffffff"/><polygon points="101,55 119,63.5 101,72" fill="url(#igtri)" stroke="#1d6b1d" stroke-width="0.6" stroke-linejoin="round"/><g transform="translate(203,64)"><path d="M6.08,0.00 L7.94,1.00 L7.52,2.74 L5.41,2.78 L4.66,3.91 L5.44,5.87 L4.00,6.93 L2.36,5.60 L1.06,5.99 L0.39,7.99 L-1.39,7.88 L-1.80,5.81 L-3.04,5.27 L-4.84,6.37 L-6.13,5.14 L-5.11,3.29 L-5.71,2.08 L-7.80,1.77 L-8.00,0.00 L-6.03,-0.76 L-5.71,-2.08 L-7.12,-3.66 L-6.13,-5.14 L-4.13,-4.46 L-3.04,-5.27 L-3.10,-7.37 L-1.39,-7.88 L-0.30,-6.07 L1.06,-5.99 L2.37,-7.64 L4.00,-6.93 L3.68,-4.84 L4.66,-3.91 L6.72,-4.33 L7.52,-2.74 L5.93,-1.35 Z" fill="url(#igear)" stroke="#7f8a93" stroke-width="0.9" stroke-linejoin="round"/><ellipse cx="-0.3" cy="0" rx="2.88" ry="3.36" fill="#5d6870"/><ellipse cx="0.9" cy="-0.4" rx="1.6" ry="2.4" fill="#e8eaec"/></g><polygon points="204.3,68.8 211.3,68.8 207.8,72.8" fill="#000"/><polygon points="352,63 359,63 355.5,59" fill="#222"/><polygon points="352,67 359,67 355.5,71" fill="#222"/><g transform="translate(371,56)"><rect x="6.0" y="0" width="5" height="17" rx="1.8" fill="url(#igplus)"/><rect x="0" y="6.0" width="17" height="5" rx="1.8" fill="url(#igplus)"/></g><polyline points="555.0,61.5 559.5,66.5 564.0,61.5" fill="none" stroke="#606060" stroke-width="1.1"/><g transform="translate(466,64.5)"><circle r="6.5" fill="#fff" stroke="#777" stroke-width="1.4"/><polygon points="-2.5,-3.5 1.5,0 -2.5,3.5" fill="#3a78d0"/><rect x="1.8" y="-3.5" width="1.5" height="7" fill="#3a78d0"/></g><polyline points="704.0,61.5 708.5,66.5 713.0,61.5" fill="none" stroke="#606060" stroke-width="1.1"/><rect x="730" y="60" width="6" height="14" rx="1.5" fill="url(#ihmr)"/><path d="M726.3,57 Q726.5,55.2 730,55.3 L734,55.5 Q739,56.5 740,61.5 Q739.5,63.5 738,62.5 Q736.5,59.6 733.5,59.8 L727.5,59.8 Q726.2,59.5 726.3,57 Z" fill="#444"/><polyline points="909.0,61.5 913.5,66.5 918.0,61.5" fill="none" stroke="#606060" stroke-width="1.1"/><polyline points="1057.0,61.5 1061.5,66.5 1066.0,61.5" fill="none" stroke="#606060" stroke-width="1.1"/><g transform="translate(990,57)"><path d="M0.2,13.5 H7.6 V1.2 Q7.6,0.2 8.6,0.2 H15.8" fill="none" stroke="#333" stroke-width="1.3"/><polygon points="5,2.2 10.2,2.2 7.6,7" fill="#b01020"/><polygon points="5,11.4 10.2,11.4 7.6,7" fill="#b01020"/></g><polyline points="1236.0,61.5 1240.5,66.5 1245.0,61.5" fill="none" stroke="#606060" stroke-width="1.1"/><g transform="translate(1162,57)"><path d="M0.2,13.5 H7.6 V1.2 Q7.6,0.2 8.6,0.2 H15.8" fill="none" stroke="#333" stroke-width="1.3"/><polygon points="5,8.8 10.2,8.8 7.6,3.9" fill="#b01020"/></g><polyline points="1384.0,61.5 1388.5,66.5 1393.0,61.5" fill="none" stroke="#606060" stroke-width="1.1"/><polyline points="1533.0,61.5 1537.5,66.5 1542.0,61.5" fill="none" stroke="#606060" stroke-width="1.1"/><polyline points="1711.0,61.5 1715.5,66.5 1720.0,61.5" fill="none" stroke="#a0a0a0" stroke-width="1.1"/><g transform="translate(1638,57)"><path d="M0.2,13.5 H3.5 V1.5 Q3.5,0.2 4.8,0.2 H10.2 Q11.5,0.2 11.5,1.5 V13.5 H15.5 M3.5,6.5 H7" fill="none" stroke="#888" stroke-width="1.2"/><polygon points="6.6,4 10.6,6.5 6.6,9" fill="#888"/></g><polyline points="1860.0,61.5 1864.5,66.5 1869.0,61.5" fill="none" stroke="#a0a0a0" stroke-width="1.1"/><polygon points="1901.0,69.0 1909.0,69.0 1905,73.0" fill="#000"/><path d="M112.5,85.5 L103,92 L112.5,98.5" fill="none" stroke="#1d5fcf" stroke-width="4.4" stroke-linecap="round" stroke-linejoin="round"/><path d="M112.5,98.5 L103.5,92" fill="none" stroke="#0a6cff" stroke-width="3" stroke-linecap="round"/><path d="M111.8,86.3 L104.5,91.6" fill="none" stroke="#8cc8ff" stroke-width="1.6" stroke-linecap="round"/><g transform="translate(899,83)"><line x1="11" y1="11" x2="17" y2="17" stroke="#707070" stroke-width="3" stroke-linecap="round"/><circle cx="7" cy="7" r="6.2" fill="#9dc2ef" stroke="#a8a8a8" stroke-width="1.5"/><text x="7" y="10.5" font-size="9" text-anchor="middle" fill="#fff" font-family="Liberation Sans" font-weight="bold">1</text></g><g transform="translate(933,84)"><path d="M2,1 L10,9" stroke="#1e90ff" stroke-width="1.6"/><polygon points="1,0 7,1 2,6" fill="#1e90ff"/></g><g transform="translate(933,97)"><rect x="0" y="0" width="16" height="3" fill="#c4c4c4"/><rect x="1.0" y="-1.5" width="0.8" height="1.5" fill="#b0b0b0"/><rect x="3.3" y="-1.5" width="0.8" height="1.5" fill="#b0b0b0"/><rect x="5.6" y="-1.5" width="0.8" height="1.5" fill="#b0b0b0"/><rect x="7.9" y="-1.5" width="0.8" height="1.5" fill="#b0b0b0"/><rect x="10.2" y="-1.5" width="0.8" height="1.5" fill="#b0b0b0"/><rect x="12.5" y="-1.5" width="0.8" height="1.5" fill="#b0b0b0"/></g><g transform="translate(964,84)"><path d="M1,0 V8 M15,0 V8 M1,4 H15" stroke="#1e90ff" stroke-width="1.6" fill="none"/></g><g transform="translate(964,97)"><rect x="0" y="0" width="16" height="3" fill="#c4c4c4"/><rect x="1.0" y="-1.5" width="0.8" height="1.5" fill="#b0b0b0"/><rect x="3.3" y="-1.5" width="0.8" height="1.5" fill="#b0b0b0"/><rect x="5.6" y="-1.5" width="0.8" height="1.5" fill="#b0b0b0"/><rect x="7.9" y="-1.5" width="0.8" height="1.5" fill="#b0b0b0"/><rect x="10.2" y="-1.5" width="0.8" height="1.5" fill="#b0b0b0"/><rect x="12.5" y="-1.5" width="0.8" height="1.5" fill="#b0b0b0"/></g><g transform="translate(996,86)"><path d="M2,1 H10 M6,1 V15 M2,15 H10" stroke="#1e90ff" stroke-width="1.6" fill="none"/></g><g transform="translate(1009,84)"><rect x="0" y="0" width="4" height="17" fill="#d0d0d0"/></g><g transform="translate(1029,84)"><path d="M1,0 V9 M1,1 H16 M1,5 H10" stroke="#1e90ff" stroke-width="1.6" fill="none"/></g><g transform="translate(1029,97)"><rect x="0" y="0" width="16" height="3" fill="#c4c4c4"/><rect x="1.0" y="-1.5" width="0.8" height="1.5" fill="#b0b0b0"/><rect x="3.3" y="-1.5" width="0.8" height="1.5" fill="#b0b0b0"/><rect x="5.6" y="-1.5" width="0.8" height="1.5" fill="#b0b0b0"/><rect x="7.9" y="-1.5" width="0.8" height="1.5" fill="#b0b0b0"/><rect x="10.2" y="-1.5" width="0.8" height="1.5" fill="#b0b0b0"/><rect x="12.5" y="-1.5" width="0.8" height="1.5" fill="#b0b0b0"/></g><g font-family="Liberation Sans" font-size="9" font-weight="bold" fill="#1e90ff"><text x="1058" y="91">1</text><text x="1070" y="91">2</text><text x="1060" y="100">3</text><text x="1074" y="100">4</text></g><polygon points="1092.0,96.0 1100.0,96.0 1096,100.0" fill="#000"/><g transform="translate(1110,83)"><line x1="11" y1="11" x2="17" y2="17" stroke="#707070" stroke-width="3" stroke-linecap="round"/><circle cx="7" cy="7" r="6.2" fill="#9dc2ef" stroke="#a8a8a8" stroke-width="1.5"/><circle cx="4.5" cy="4.5" r="1.2" fill="none" stroke="#fff" stroke-width="0.8"/><circle cx="9.5" cy="4.5" r="1.2" fill="none" stroke="#fff" stroke-width="0.8"/><circle cx="4.5" cy="9.5" r="1.2" fill="none" stroke="#fff" stroke-width="0.8"/><circle cx="9.5" cy="9.5" r="1.2" fill="none" stroke="#fff" stroke-width="0.8"/></g><g transform="translate(1149,92)"><path d="M6.08,0.00 L7.94,1.00 L7.52,2.74 L5.41,2.78 L4.66,3.91 L5.44,5.87 L4.00,6.93 L2.36,5.60 L1.06,5.99 L0.39,7.99 L-1.39,7.88 L-1.80,5.81 L-3.04,5.27 L-4.84,6.37 L-6.13,5.14 L-5.11,3.29 L-5.71,2.08 L-7.80,1.77 L-8.00,0.00 L-6.03,-0.76 L-5.71,-2.08 L-7.12,-3.66 L-6.13,-5.14 L-4.13,-4.46 L-3.04,-5.27 L-3.10,-7.37 L-1.39,-7.88 L-0.30,-6.07 L1.06,-5.99 L2.37,-7.64 L4.00,-6.93 L3.68,-4.84 L4.66,-3.91 L6.72,-4.33 L7.52,-2.74 L5.93,-1.35 Z" fill="url(#igear)" stroke="#7f8a93" stroke-width="0.9" stroke-linejoin="round"/><ellipse cx="-0.3" cy="0" rx="2.88" ry="3.36" fill="#5d6870"/><ellipse cx="0.9" cy="-0.4" rx="1.6" ry="2.4" fill="#e8eaec"/></g><polygon points="1150.3,96.8 1157.3,96.8 1153.8,100.8" fill="#000"/><polygon points="1203.0,89.0 1212.0,89.0 1207.5,94.0" fill="#000"/><polygon points="1203.5,167.5 1212.5,167.5 1208.0,172.5" fill="#000"/><polygon points="1203.5,348.5 1212.5,348.5 1208.0,353.5" fill="#000"/><polygon points="1203.5,451.0 1212.5,451.0 1208.0,456.0" fill="#000"/><polygon points="1203.5,511.5 1212.5,511.5 1208.0,516.5" fill="#000"/><polygon points="22.0,676.0 31.0,676.0 26.5,681.0" fill="#000"/><polygon points="358.5,676.5 367.5,676.5 363.0,681.5" fill="#000"/><polygon points="547.5,676.0 556.5,676.0 552.0,681.0" fill="#000"/><g transform="translate(1630,84)"><rect x="0.5" y="0.5" width="10" height="8" fill="#e8f0fb" stroke="#6d95cf" stroke-width="1"/><rect x="0.5" y="0.5" width="10" height="2" fill="#8fb0de"/><rect x="4.5" y="4.5" width="10" height="8" fill="#f3f7fd" stroke="#6d95cf" stroke-width="1"/><rect x="4.5" y="4.5" width="10" height="2" fill="#8fb0de"/></g><g transform="translate(1652,85)"><rect x="0.75" y="0.75" width="13" height="11.5" fill="#f4f6fb" stroke="#4f7fcf" stroke-width="1.5"/><path d="M2.5,5 v-2.5 h2.5 M12,5 v-2.5 h-2.5 M2.5,8 v2.5 h2.5 M12,8 v2.5 h-2.5" stroke="#e0703a" stroke-width="1" fill="none"/></g><g transform="translate(1672,84)"><path d="M2,2 L12,12 M12,2 L2,12" stroke="url(#ixred)" stroke-width="3.6" stroke-linecap="round"/></g><g transform="translate(1228,107)"><rect x="6.0" y="0" width="5" height="17" rx="1.8" fill="url(#igplus)"/><rect x="0" y="6.0" width="17" height="5" rx="1.8" fill="url(#igplus)"/></g><rect x="1351" y="114" width="17" height="5" rx="2" fill="url(#irpill)"/><rect x="1352" y="114.8" width="7.65" height="1.6" rx="0.8" fill="#f7b0b0" opacity="0.7"/><g transform="translate(1425,108)"><rect x="0.5" y="0.5" width="18" height="16.5" rx="1" fill="#fafafa" stroke="#c8c8c8"/><rect x="1" y="1" width="17" height="4.5" fill="#dcdcdc"/><rect x="2.5" y="7" width="3" height="3" fill="#3a7bd5"/><rect x="2.5" y="12" width="3" height="3" fill="#3a7bd5"/><path d="M6.5,5.5 V17 M8,9 h9 M8,14 h9" stroke="#b8b8b8" stroke-width="0.9"/></g><polygon points="1485.5,120.0 1492.5,120.0 1489,124.0" fill="#000"/><polygon points="1675.5,148 1685.5,148 1680.5,141" fill="#a3a3a3"/><polygon points="1675.5,676 1685.5,676 1680.5,683" fill="#a3a3a3"/><polyline points="1284.0,166.5 1288.5,171.5 1293.0,166.5" fill="none" stroke="#606060" stroke-width="1.1"/><polyline points="1418.0,166.5 1422.5,171.5 1427.0,166.5" fill="none" stroke="#606060" stroke-width="1.1"/><polyline points="1477.0,166.5 1481.5,171.5 1486.0,166.5" fill="none" stroke="#606060" stroke-width="1.1"/><polyline points="1609.5,167.0 1614,172.0 1618.5,167.0" fill="none" stroke="#b0b0b0" stroke-width="1.1"/><rect x="1640" y="167" width="17" height="5" rx="2" fill="url(#irpill)"/><rect x="1641" y="167.8" width="7.65" height="1.6" rx="0.8" fill="#f7b0b0" opacity="0.7"/><polyline points="1284.0,192.5 1288.5,197.5 1293.0,192.5" fill="none" stroke="#606060" stroke-width="1.1"/><polyline points="1418.0,192.5 1422.5,197.5 1427.0,192.5" fill="none" stroke="#606060" stroke-width="1.1"/><polyline points="1477.0,192.5 1481.5,197.5 1486.0,192.5" fill="none" stroke="#606060" stroke-width="1.1"/><polyline points="1611.0,192.5 1615.5,197.5 1620.0,192.5" fill="none" stroke="#606060" stroke-width="1.1"/><rect x="1640" y="193" width="17" height="5" rx="2" fill="url(#irpill)"/><rect x="1641" y="193.8" width="7.65" height="1.6" rx="0.8" fill="#f7b0b0" opacity="0.7"/><polyline points="1284.0,218.5 1288.5,223.5 1293.0,218.5" fill="none" stroke="#606060" stroke-width="1.1"/><polyline points="1418.0,218.5 1422.5,223.5 1427.0,218.5" fill="none" stroke="#606060" stroke-width="1.1"/><polyline points="1477.0,218.5 1481.5,223.5 1486.0,218.5" fill="none" stroke="#606060" stroke-width="1.1"/><polyline points="1611.0,218.5 1615.5,223.5 1620.0,218.5" fill="none" stroke="#606060" stroke-width="1.1"/><rect x="1640" y="219" width="17" height="5" rx="2" fill="url(#irpill)"/><rect x="1641" y="219.8" width="7.65" height="1.6" rx="0.8" fill="#f7b0b0" opacity="0.7"/><polyline points="1284.0,244.5 1288.5,249.5 1293.0,244.5" fill="none" stroke="#606060" stroke-width="1.1"/><polyline points="1418.0,244.5 1422.5,249.5 1427.0,244.5" fill="none" stroke="#606060" stroke-width="1.1"/><polyline points="1477.0,244.5 1481.5,249.5 1486.0,244.5" fill="none" stroke="#606060" stroke-width="1.1"/><polyline points="1611.0,244.5 1615.5,249.5 1620.0,244.5" fill="none" stroke="#606060" stroke-width="1.1"/><rect x="1640" y="245" width="17" height="5" rx="2" fill="url(#irpill)"/><rect x="1641" y="245.8" width="7.65" height="1.6" rx="0.8" fill="#f7b0b0" opacity="0.7"/><polygon points="1900,114 1911,114 1905.5,107" fill="#a3a3a3"/><polygon points="1900,921 1911,921 1905.5,928" fill="#a3a3a3"/><g transform="translate(1697,86)"><path d="M0.5,4 H8.5 V1 L13.5,5.5 L8.5,10 V7 H0.5 Z" fill="#b8e6a8" stroke="#5aa84a" stroke-width="1" stroke-linejoin="round"/></g><rect x="1699" y="108" width="16" height="16" rx="3" fill="#0063be"/><polyline points="1703.2,116.5 1706,119 1711,113.5" fill="none" stroke="#fff" stroke-width="1.3"/><g transform="translate(1869,116)"><path d="M5.32,0.00 L6.94,0.88 L6.58,2.39 L4.73,2.43 L4.08,3.42 L4.76,5.14 L3.50,6.06 L2.06,4.90 L0.92,5.24 L0.34,6.99 L-1.22,6.89 L-1.57,5.08 L-2.66,4.61 L-4.23,5.58 L-5.36,4.50 L-4.47,2.88 L-5.00,1.82 L-6.83,1.55 L-7.00,0.00 L-5.28,-0.67 L-5.00,-1.82 L-6.23,-3.20 L-5.36,-4.50 L-3.61,-3.90 L-2.66,-4.61 L-2.71,-6.45 L-1.22,-6.89 L-0.26,-5.31 L0.92,-5.24 L2.07,-6.69 L3.50,-6.06 L3.22,-4.24 L4.08,-3.42 L5.88,-3.79 L6.58,-2.39 L5.19,-1.18 Z" fill="url(#igear)" stroke="#7f8a93" stroke-width="0.9" stroke-linejoin="round"/><ellipse cx="-0.3" cy="0" rx="2.52" ry="2.94" fill="#5d6870"/><ellipse cx="0.9" cy="-0.4" rx="1.4000000000000001" ry="2.1" fill="#e8eaec"/></g><polygon points="1869.7,119.95 1876.7,119.95 1873.2,123.95" fill="#000"/><polyline points="1867.0,135.5 1871.5,140.5 1876.0,135.5" fill="none" stroke="#606060" stroke-width="1.1"/><polyline points="1867.0,158.5 1871.5,163.5 1876.0,158.5" fill="none" stroke="#606060" stroke-width="1.1"/><path d="M1709.2,176 H1712.8 V184 H1715.5 L1711,191 L1706.5,184 H1709.2 Z" fill="url(#igarr)" stroke="#4f9a45" stroke-width="0.6" stroke-linejoin="round"/><g transform="translate(1708,213)"><path d="M6.08,0.00 L7.94,1.00 L7.52,2.74 L5.41,2.78 L4.66,3.91 L5.44,5.87 L4.00,6.93 L2.36,5.60 L1.06,5.99 L0.39,7.99 L-1.39,7.88 L-1.80,5.81 L-3.04,5.27 L-4.84,6.37 L-6.13,5.14 L-5.11,3.29 L-5.71,2.08 L-7.80,1.77 L-8.00,0.00 L-6.03,-0.76 L-5.71,-2.08 L-7.12,-3.66 L-6.13,-5.14 L-4.13,-4.46 L-3.04,-5.27 L-3.10,-7.37 L-1.39,-7.88 L-0.30,-6.07 L1.06,-5.99 L2.37,-7.64 L4.00,-6.93 L3.68,-4.84 L4.66,-3.91 L6.72,-4.33 L7.52,-2.74 L5.93,-1.35 Z" fill="url(#igear)" stroke="#7f8a93" stroke-width="0.9" stroke-linejoin="round"/><ellipse cx="-0.3" cy="0" rx="2.88" ry="3.36" fill="#5d6870"/><ellipse cx="0.9" cy="-0.4" rx="1.6" ry="2.4" fill="#e8eaec"/></g><polygon points="1870.5,212.5 1879.5,212.5 1875,217.5" fill="#000"/><g transform="translate(1700,235)"><rect x="6.0" y="0" width="5" height="17" rx="1.8" fill="url(#igplus)"/><rect x="0" y="6.0" width="17" height="5" rx="1.8" fill="url(#igplus)"/></g><polygon points="1870.5,241.5 1879.5,241.5 1875,246.5" fill="#000"/><rect x="1699" y="265" width="16" height="16" rx="3" fill="#0063be"/><polyline points="1703.2,273.5 1706,276 1711,270.5" fill="none" stroke="#fff" stroke-width="1.3"/><g transform="translate(1869,273)"><path d="M5.32,0.00 L6.94,0.88 L6.58,2.39 L4.73,2.43 L4.08,3.42 L4.76,5.14 L3.50,6.06 L2.06,4.90 L0.92,5.24 L0.34,6.99 L-1.22,6.89 L-1.57,5.08 L-2.66,4.61 L-4.23,5.58 L-5.36,4.50 L-4.47,2.88 L-5.00,1.82 L-6.83,1.55 L-7.00,0.00 L-5.28,-0.67 L-5.00,-1.82 L-6.23,-3.20 L-5.36,-4.50 L-3.61,-3.90 L-2.66,-4.61 L-2.71,-6.45 L-1.22,-6.89 L-0.26,-5.31 L0.92,-5.24 L2.07,-6.69 L3.50,-6.06 L3.22,-4.24 L4.08,-3.42 L5.88,-3.79 L6.58,-2.39 L5.19,-1.18 Z" fill="url(#igear)" stroke="#7f8a93" stroke-width="0.9" stroke-linejoin="round"/><ellipse cx="-0.3" cy="0" rx="2.52" ry="2.94" fill="#5d6870"/><ellipse cx="0.9" cy="-0.4" rx="1.4000000000000001" ry="2.1" fill="#e8eaec"/></g><polygon points="1869.7,276.95 1876.7,276.95 1873.2,280.95" fill="#000"/><polyline points="1867.0,292.5 1871.5,297.5 1876.0,292.5" fill="none" stroke="#606060" stroke-width="1.1"/><polyline points="1867.0,315.5 1871.5,320.5 1876.0,315.5" fill="none" stroke="#606060" stroke-width="1.1"/><rect x="1699" y="341" width="16" height="16" rx="3" fill="#0063be"/><polyline points="1703.2,349.5 1706,352 1711,346.5" fill="none" stroke="#fff" stroke-width="1.3"/><g transform="translate(1869,349)"><path d="M5.32,0.00 L6.94,0.88 L6.58,2.39 L4.73,2.43 L4.08,3.42 L4.76,5.14 L3.50,6.06 L2.06,4.90 L0.92,5.24 L0.34,6.99 L-1.22,6.89 L-1.57,5.08 L-2.66,4.61 L-4.23,5.58 L-5.36,4.50 L-4.47,2.88 L-5.00,1.82 L-6.83,1.55 L-7.00,0.00 L-5.28,-0.67 L-5.00,-1.82 L-6.23,-3.20 L-5.36,-4.50 L-3.61,-3.90 L-2.66,-4.61 L-2.71,-6.45 L-1.22,-6.89 L-0.26,-5.31 L0.92,-5.24 L2.07,-6.69 L3.50,-6.06 L3.22,-4.24 L4.08,-3.42 L5.88,-3.79 L6.58,-2.39 L5.19,-1.18 Z" fill="url(#igear)" stroke="#7f8a93" stroke-width="0.9" stroke-linejoin="round"/><ellipse cx="-0.3" cy="0" rx="2.52" ry="2.94" fill="#5d6870"/><ellipse cx="0.9" cy="-0.4" rx="1.4000000000000001" ry="2.1" fill="#e8eaec"/></g><polygon points="1869.7,352.95 1876.7,352.95 1873.2,356.95" fill="#000"/><polyline points="1867.0,368.5 1871.5,373.5 1876.0,368.5" fill="none" stroke="#606060" stroke-width="1.1"/><polyline points="1867.0,391.5 1871.5,396.5 1876.0,391.5" fill="none" stroke="#606060" stroke-width="1.1"/><path d="M1710.2,415 H1713.8 V425 H1716.5 L1712,432 L1707.5,425 H1710.2 Z" fill="url(#igarr)" stroke="#4f9a45" stroke-width="0.6" stroke-linejoin="round"/><path d="M1787.2,415 H1790.8 V425 H1793.5 L1789,432 L1784.5,425 H1787.2 Z" fill="url(#igarr)" stroke="#4f9a45" stroke-width="0.6" stroke-linejoin="round"/><g transform="translate(1631,700)"><rect x="0.5" y="0.5" width="10" height="8" fill="#e8f0fb" stroke="#6d95cf" stroke-width="1"/><rect x="0.5" y="0.5" width="10" height="2" fill="#8fb0de"/><rect x="4.5" y="4.5" width="10" height="8" fill="#f3f7fd" stroke="#6d95cf" stroke-width="1"/><rect x="4.5" y="4.5" width="10" height="2" fill="#8fb0de"/></g><g transform="translate(1652,701)"><rect x="0.75" y="0.75" width="13" height="11.5" fill="#f4f6fb" stroke="#4f7fcf" stroke-width="1.5"/><path d="M2.5,5 v-2.5 h2.5 M12,5 v-2.5 h-2.5 M2.5,8 v2.5 h2.5 M12,8 v2.5 h-2.5" stroke="#e0703a" stroke-width="1" fill="none"/></g><g transform="translate(1673,700)"><path d="M2,2 L12,12 M12,2 L2,12" stroke="url(#ixred)" stroke-width="3.6" stroke-linecap="round"/></g><g transform="translate(7,723)"><rect x="6.0" y="0" width="5" height="17" rx="1.8" fill="url(#igplus)"/><rect x="0" y="6.0" width="17" height="5" rx="1.8" fill="url(#igplus)"/></g><rect x="130" y="730" width="17" height="5" rx="2" fill="url(#irpill)"/><rect x="131" y="730.8" width="7.65" height="1.6" rx="0.8" fill="#f7b0b0" opacity="0.7"/><g transform="translate(204,724)"><rect x="0.5" y="0.5" width="18" height="16.5" rx="1" fill="#fafafa" stroke="#c8c8c8"/><rect x="1" y="1" width="17" height="4.5" fill="#dcdcdc"/><rect x="2.5" y="7" width="3" height="3" fill="#3a7bd5"/><rect x="2.5" y="12" width="3" height="3" fill="#3a7bd5"/><path d="M6.5,5.5 V17 M8,9 h9 M8,14 h9" stroke="#b8b8b8" stroke-width="0.9"/></g><polygon points="262.5,736.0 269.5,736.0 266,740.0" fill="#000"/><polygon points="1675.5,762 1685.5,762 1680.5,755" fill="#a3a3a3"/><polygon points="1675.5,921 1685.5,921 1680.5,928" fill="#a3a3a3"/><polyline points="224.0,782.5 228.5,787.5 233.0,782.5" fill="none" stroke="#606060" stroke-width="1.1"/><polyline points="283.0,782.5 287.5,787.5 292.0,782.5" fill="none" stroke="#606060" stroke-width="1.1"/><polyline points="505.0,782.5 509.5,787.5 514.0,782.5" fill="none" stroke="#606060" stroke-width="1.1"/><rect x="1640" y="783" width="17" height="5" rx="2" fill="url(#irpill)"/><rect x="1641" y="783.8" width="7.65" height="1.6" rx="0.8" fill="#f7b0b0" opacity="0.7"/><polyline points="224.0,808.5 228.5,813.5 233.0,808.5" fill="none" stroke="#606060" stroke-width="1.1"/><polyline points="283.0,808.5 287.5,813.5 292.0,808.5" fill="none" stroke="#606060" stroke-width="1.1"/><polyline points="505.0,808.5 509.5,813.5 514.0,808.5" fill="none" stroke="#606060" stroke-width="1.1"/><rect x="1640" y="809" width="17" height="5" rx="2" fill="url(#irpill)"/><rect x="1641" y="809.8" width="7.65" height="1.6" rx="0.8" fill="#f7b0b0" opacity="0.7"/></svg>
</body></html>
